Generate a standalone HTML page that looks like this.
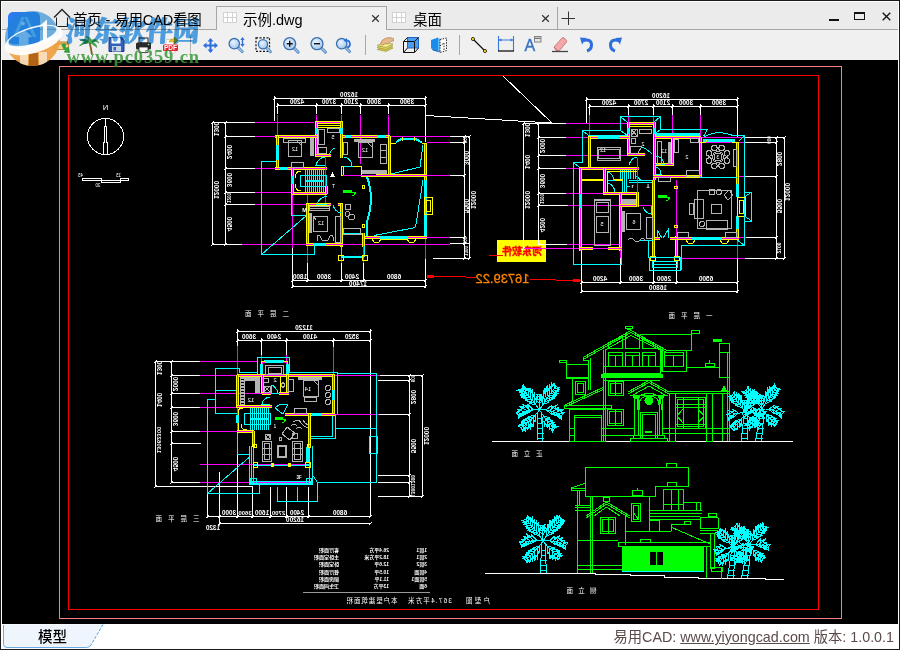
<!DOCTYPE html>
<html lang="zh"><head><meta charset="utf-8"><title>易用CAD看图</title>
<style>
*{box-sizing:border-box;margin:0;padding:0}
html,body{width:900px;height:650px;overflow:hidden;background:#000}
body{position:relative;font-family:"Liberation Sans","Noto Sans CJK SC",sans-serif;color:#000}
#win{position:absolute;left:0;top:0;width:900px;height:650px;border:1px solid #1a1a1a;background:#fff}
#title{position:absolute;left:1px;top:1px;width:896px;height:28px;background:#ebebeb;border-bottom:1px solid #a6a6a6}
#tool{position:absolute;left:1px;top:29px;width:896px;height:30px;background:#f0f0f0}
#cv{position:absolute;left:0;top:0;width:900px;height:650px;pointer-events:none}
#status{position:absolute;left:1px;top:623px;width:896px;height:25px;background:#fff}
.tab{position:absolute;top:5px;height:24px;font-size:14.5px;line-height:22px;white-space:nowrap}
.tab.act{background:#f0f0f0;border:1px solid #a6a6a6;border-bottom:none;height:24px}
.tx{position:absolute;top:0}
.ic{position:absolute}
svg text{font-family:"Liberation Sans","Noto Sans CJK SC",sans-serif}
</style></head>
<body>
<div id="win">
<div id="title">
<svg class="ic" style="left:51px;top:6px" width="18" height="20" viewBox="0 0 18 20"><path d="M1 9.500L9 1.500L17 9.500" stroke="#222" stroke-width="1.400" fill="none"/><path d="M3.500 9.500V18.500H14.500V9.500" stroke="#222" stroke-width="1" fill="none"/></svg>
<div class="tab" style="left:71px;top:7px;letter-spacing:-0.15px">首页 - 易用CAD看图</div>
<div class="tab act" style="left:214px;top:4px;width:171px;height:25px"></div>
<svg class="ic" style="left:221px;top:10px" width="14" height="11" viewBox="0 0 14 11"><rect x="0.5" y="0.5" width="13" height="10" fill="#fff" stroke="#d2d2d2"/><path d="M4.5 0V11M9.5 0V11M0 5.5H14" stroke="#d2d2d2" fill="none"/></svg>
<div class="tab" style="left:241px;top:7px">示例.dwg</div>
<svg class="ic" style="left:369px;top:12px" width="9" height="9" viewBox="0 0 9 9"><path d="M1.2 1.2L7.8 7.8M7.8 1.2L1.2 7.8" stroke="#333" stroke-width="1.25" fill="none"/></svg>
<svg class="ic" style="left:390px;top:10px" width="14" height="11" viewBox="0 0 14 11"><rect x="0.5" y="0.5" width="13" height="10" fill="#fff" stroke="#d2d2d2"/><path d="M4.5 0V11M9.5 0V11M0 5.5H14" stroke="#d2d2d2" fill="none"/></svg>
<div class="tab" style="left:411px;top:7px">桌面</div>
<svg class="ic" style="left:539px;top:12px" width="9" height="9" viewBox="0 0 9 9"><path d="M1.2 1.2L7.8 7.8M7.8 1.2L1.2 7.8" stroke="#333" stroke-width="1.25" fill="none"/></svg>
<div class="ic" style="left:555px;top:5px;width:1px;height:23px;background:#a6a6a6"></div>
<svg class="ic" style="left:559px;top:9px" width="14" height="14" viewBox="0 0 14 14"><path d="M7.500 0.5V14M0.5 7.500H14" stroke="#333" stroke-width="1" fill="none"/></svg>
<div class="ic" style="left:827px;top:17px;width:10px;height:2px;background:#111"></div>
<div class="ic" style="left:852px;top:10px;width:11px;height:8px;border:1px solid #111;border-top-width:2px"></div>
<svg class="ic" style="left:880px;top:10px" width="9" height="9" viewBox="0 0 9 9"><path d="M0.7 0.7L8.3 8.3M8.3 0.7L0.7 8.3" stroke="#111" stroke-width="1.3" fill="none"/></svg>
</div>
<div id="tool"></div>
<div id="status">
<svg class="ic" style="left:0;top:0" width="110" height="25" viewBox="0 0 110 25"><path d="M1 0.5H101L89 21Q87.5 23.5 84.5 23.5H5Q1.5 23.5 1.5 20Z" fill="#eef5fc" stroke="none"/><path d="M89 21Q87.5 23.5 84.5 23.5H5Q1.5 23.5 1.5 20V1" fill="none" stroke="#6aaae0"/><path d="M101 0.5L89 21" fill="none" stroke="#5aa0dc" stroke-dasharray="3 1.5"/><text x="36" y="18" font-size="14.5" fill="#000" font-weight="500">模型</text></svg>
<div class="tx" style="right:4px;top:3px;font-size:14.3px;line-height:20px;color:#5a4a4a;white-space:nowrap">易用CAD: <span style="text-decoration:underline">www.yiyongcad.com</span> 版本: 1.0.0.1</div>
</div>
</div>
<svg id="cv" width="900" height="650" viewBox="0 0 900 650" shape-rendering="crispEdges" fill="none">
<rect x="2" y="60" width="896" height="564" fill="#000" stroke="none"/>
<rect x="59.5" y="66.5" width="782" height="552" stroke="#ff7f7f" fill="none"/>
<rect x="68.5" y="75.5" width="750" height="534" stroke="#ff0000" fill="none"/>
<circle cx="105.5" cy="136.5" r="18" stroke="#ffffff" fill="none"/>
<path stroke="#ffffff" d="M105.5 118L105.5 127"/>
<path stroke="#ffffff" d="M104.5 126L104.5 143"/>
<path stroke="#ffffff" d="M106.5 126L106.5 143"/>
<path stroke="#ffffff" d="M103.5 142L103.5 155"/>
<path stroke="#ffffff" d="M107.5 142L107.5 155"/>
<text transform="translate(105.5 109.5) scale(-1 1)" font-size="7.5" fill="#ffffff" stroke="none" text-anchor="middle">N</text>
<rect x="82.5" y="178.5" width="19" height="2" stroke="#ffffff" fill="none"/>
<rect x="101.5" y="180.5" width="19" height="2" stroke="#ffffff" fill="none"/>
<rect x="120.5" y="178.5" width="8" height="2" stroke="#ffffff" fill="none"/>
<text transform="translate(80.5 176.5) scale(-1 1)" font-size="4.5" fill="#ffffff" stroke="none" text-anchor="middle">45</text>
<text transform="translate(118.5 176.5) scale(-1 1)" font-size="4.5" fill="#ffffff" stroke="none" text-anchor="middle">15</text>
<text transform="translate(98 187) scale(-1 1)" font-size="4.5" fill="#ffffff" stroke="none" text-anchor="middle">30</text>
<path stroke="#ffffff" d="M503 76L552 123"/>
<path stroke="#ffffff" d="M425.5 115.5L552 123"/>
<rect x="497" y="240" width="49" height="21.5" fill="#ffff00" stroke="none"/>
<text transform="translate(522 254.5) scale(-1 1)" font-size="10" fill="#ff0000" text-anchor="middle" font-weight="bold" stroke="#ff0000" stroke-width=".35" font-family="Liberation Serif,Noto Serif CJK SC,serif">河东软件</text>
<path stroke="#ff0000" d="M489 255.5L503 255.5"/>
<text transform="translate(502.5 283) scale(-1 1)" font-size="13.5" fill="#ff8a00" text-anchor="middle" stroke="#ff8000" stroke-width=".3" font-family="Liberation Mono,monospace" textLength="54" lengthAdjust="spacingAndGlyphs">16739.22</text>
<path stroke="#ff0000" d="M427 276.5L455 276.5"/>
<path stroke="#ff0000" d="M455 276.5L476 277.5"/>
<rect x="427" y="275" width="7" height="3" fill="#ff0000" stroke="none"/>
<path stroke="#ff0000" d="M530 279.5L581 280.5"/>
<rect x="573" y="279" width="7" height="3" fill="#ff0000" stroke="none"/>
<path stroke="#ffffff" d="M274 98.5L426 98.5"/>
<path stroke="#ffffff" d="M277 105.5L426 105.5"/>
<path stroke="#ffffff" d="M274.5 96L274.5 121"/>
<path stroke="#ffffff" d="M277.5 103L277.5 114"/>
<path stroke="#ffffff" d="M276 107L279 104"/>
<path stroke="#ffffff" d="M316.5 103L316.5 114"/>
<path stroke="#ffffff" d="M315 107L318 104"/>
<path stroke="#ffffff" d="M341.5 103L341.5 114"/>
<path stroke="#ffffff" d="M340 107L343 104"/>
<path stroke="#ffffff" d="M360.5 103L360.5 114"/>
<path stroke="#ffffff" d="M359 107L362 104"/>
<path stroke="#ffffff" d="M388.5 103L388.5 114"/>
<path stroke="#ffffff" d="M387 107L390 104"/>
<path stroke="#ffffff" d="M425.5 96L425.5 142"/>
<path stroke="#ffffff" d="M273 100L276 97"/>
<path stroke="#ffffff" d="M424 100L427 97"/>
<path stroke="#ffffff" d="M424 107L427 104"/>
<path stroke="#ff00ff" d="M277.5 115L277.5 135"/>
<path stroke="#ff00ff" d="M316.5 115L316.5 121"/>
<path stroke="#ff00ff" d="M341.5 115L341.5 121"/>
<path stroke="#ff00ff" d="M360.5 115L360.5 164"/>
<path stroke="#ff00ff" d="M388.5 115L388.5 136"/>
<text transform="translate(297 103.5) scale(-1 1)" font-size="6.5" fill="#ffffff" stroke="none" text-anchor="middle" font-weight="bold">4200</text>
<text transform="translate(329 103.5) scale(-1 1)" font-size="6.5" fill="#ffffff" stroke="none" text-anchor="middle" font-weight="bold">3700</text>
<text transform="translate(351 103.5) scale(-1 1)" font-size="6.5" fill="#ffffff" stroke="none" text-anchor="middle" font-weight="bold">2100</text>
<text transform="translate(374 103.5) scale(-1 1)" font-size="6.5" fill="#ffffff" stroke="none" text-anchor="middle" font-weight="bold">3000</text>
<text transform="translate(407 103.5) scale(-1 1)" font-size="6.5" fill="#ffffff" stroke="none" text-anchor="middle" font-weight="bold">3900</text>
<text transform="translate(349 96.5) scale(-1 1)" font-size="6.5" fill="#ffffff" stroke="none" text-anchor="middle" font-weight="bold">16200</text>
<path stroke="#ffffff" d="M212.5 122L212.5 245"/>
<path stroke="#ffffff" d="M225.5 122L225.5 245"/>
<path stroke="#ffffff" d="M224 124L227 121"/>
<path stroke="#ffffff" d="M224 138L227 135"/>
<path stroke="#ffffff" d="M224 170L227 167"/>
<path stroke="#ffffff" d="M224 194L227 191"/>
<path stroke="#ffffff" d="M224 206L227 203"/>
<path stroke="#ffffff" d="M224 246L227 243"/>
<path stroke="#ffffff" d="M211 124L214 121"/>
<path stroke="#ffffff" d="M211 246L214 243"/>
<path stroke="#ffffff" d="M212 122.5L255 122.5"/>
<path stroke="#ff00ff" d="M255 122.5L314 122.5"/>
<path stroke="#ffffff" d="M225 136.5L255 136.5"/>
<path stroke="#ff00ff" d="M255 136.5L275 136.5"/>
<path stroke="#ffffff" d="M225 168.5L255 168.5"/>
<path stroke="#ff00ff" d="M255 168.5L275 168.5"/>
<path stroke="#ffffff" d="M225 192.5L255 192.5"/>
<path stroke="#ff00ff" d="M255 192.5L292 192.5"/>
<path stroke="#ffffff" d="M225 204.5L255 204.5"/>
<path stroke="#ff00ff" d="M255 204.5L307 204.5"/>
<path stroke="#ffffff" d="M212 244.5L242 244.5"/>
<path stroke="#ff00ff" d="M242 244.5L450 244.5"/>
<text transform="translate(214 129) rotate(90) scale(-1 1)" font-size="6.5" fill="#ffffff" stroke="none" text-anchor="middle" font-weight="bold">1300</text>
<text transform="translate(227 152) rotate(90) scale(-1 1)" font-size="6.5" fill="#ffffff" stroke="none" text-anchor="middle" font-weight="bold">2400</text>
<text transform="translate(227 180) rotate(90) scale(-1 1)" font-size="6.5" fill="#ffffff" stroke="none" text-anchor="middle" font-weight="bold">3600</text>
<text transform="translate(227 224) rotate(90) scale(-1 1)" font-size="6.5" fill="#ffffff" stroke="none" text-anchor="middle" font-weight="bold">4500</text>
<text transform="translate(214 190) rotate(90) scale(-1 1)" font-size="6.5" fill="#ffffff" stroke="none" text-anchor="middle" font-weight="bold">12000</text>
<text transform="translate(227 198) rotate(90) scale(-1 1)" font-size="4.5" fill="#ffffff" stroke="none" text-anchor="middle" font-weight="bold">1200</text>
<path stroke="#ffffff" d="M464.5 136L464.5 259"/>
<path stroke="#ffffff" d="M469.5 136L469.5 259"/>
<path stroke="#ffffff" d="M463 138L466 135"/>
<path stroke="#ffffff" d="M463 144L466 141"/>
<path stroke="#ffffff" d="M463 177L466 174"/>
<path stroke="#ffffff" d="M463 239L466 236"/>
<path stroke="#ffffff" d="M463 245L466 242"/>
<path stroke="#ffffff" d="M463 260L466 257"/>
<path stroke="#ffffff" d="M468 138L471 135"/>
<path stroke="#ffffff" d="M468 260L471 257"/>
<path stroke="#ff00ff" d="M389 136.5L450 136.5"/>
<path stroke="#ffffff" d="M450 136.5L470 136.5"/>
<path stroke="#ff00ff" d="M427 142.5L450 142.5"/>
<path stroke="#ffffff" d="M450 142.5L465 142.5"/>
<path stroke="#ff00ff" d="M427 175.5L450 175.5"/>
<path stroke="#ffffff" d="M450 175.5L465 175.5"/>
<path stroke="#ff00ff" d="M427 237.5L450 237.5"/>
<path stroke="#ffffff" d="M450 237.5L465 237.5"/>
<path stroke="#ffffff" d="M450 243.5L470 243.5"/>
<path stroke="#ffffff" d="M433 258.5L470 258.5"/>
<text transform="translate(463 139.5) rotate(90) scale(-1 1)" font-size="4.5" fill="#ffffff" stroke="none" text-anchor="middle" font-weight="bold">600</text>
<text transform="translate(464 158) rotate(90) scale(-1 1)" font-size="6.5" fill="#ffffff" stroke="none" text-anchor="middle" font-weight="bold">3000</text>
<text transform="translate(464 206) rotate(90) scale(-1 1)" font-size="6.5" fill="#ffffff" stroke="none" text-anchor="middle" font-weight="bold">5500</text>
<text transform="translate(471 200) rotate(90) scale(-1 1)" font-size="6.5" fill="#ffffff" stroke="none" text-anchor="middle" font-weight="bold">12000</text>
<text transform="translate(463 240.5) rotate(90) scale(-1 1)" font-size="4.5" fill="#ffffff" stroke="none" text-anchor="middle" font-weight="bold">600</text>
<text transform="translate(464 251) rotate(90) scale(-1 1)" font-size="4.5" fill="#ffffff" stroke="none" text-anchor="middle" font-weight="bold">1300</text>
<path stroke="#ffffff" d="M292 280.5L426 280.5"/>
<path stroke="#ffffff" d="M292 286.5L426 286.5"/>
<path stroke="#ffffff" d="M291 282L294 279"/>
<path stroke="#ffffff" d="M306 282L309 279"/>
<path stroke="#ffffff" d="M340 282L343 279"/>
<path stroke="#ffffff" d="M362 282L365 279"/>
<path stroke="#ffffff" d="M424 282L427 279"/>
<path stroke="#ffffff" d="M291 288L294 285"/>
<path stroke="#ffffff" d="M424 288L427 285"/>
<path stroke="#ff00ff" d="M292.5 194L292.5 248"/>
<path stroke="#ffffff" d="M292.5 248L292.5 288"/>
<path stroke="#ff00ff" d="M307.5 194L307.5 263"/>
<path stroke="#ffffff" d="M307.5 263L307.5 282"/>
<path stroke="#ff00ff" d="M341.5 246L341.5 263"/>
<path stroke="#ffffff" d="M341.5 263L341.5 282"/>
<path stroke="#ff00ff" d="M363.5 246L363.5 263"/>
<path stroke="#ffffff" d="M363.5 263L363.5 282"/>
<path stroke="#ff00ff" d="M425.5 237L425.5 259"/>
<path stroke="#ffffff" d="M425.5 259L425.5 288"/>
<text transform="translate(300 279) scale(-1 1)" font-size="6.5" fill="#ffffff" stroke="none" text-anchor="middle" font-weight="bold">1800</text>
<text transform="translate(324 279) scale(-1 1)" font-size="6.5" fill="#ffffff" stroke="none" text-anchor="middle" font-weight="bold">3600</text>
<text transform="translate(352 279) scale(-1 1)" font-size="6.5" fill="#ffffff" stroke="none" text-anchor="middle" font-weight="bold">2400</text>
<text transform="translate(394 279) scale(-1 1)" font-size="6.5" fill="#ffffff" stroke="none" text-anchor="middle" font-weight="bold">6800</text>
<text transform="translate(358 285.5) scale(-1 1)" font-size="6.5" fill="#ffffff" stroke="none" text-anchor="middle" font-weight="bold">17400</text>
<path stroke="#00ffff" d="M261.5 161L261.5 255"/>
<path stroke="#00ffff" d="M261 161.5L276 161.5"/>
<path stroke="#00ffff" d="M261 254.5L315 254.5"/>
<path stroke="#00ffff" d="M314.5 245L314.5 255"/>
<path stroke="#00ffff" d="M261.5 254.5L306.5 215.5"/>
<path stroke="#00ffff" d="M291.5 194L291.5 216"/>
<path stroke="#00ffff" d="M291 215.5L307 215.5"/>
<rect x="315" y="121" width="28" height="3" fill="#ffff00" stroke="none"/>
<rect x="315" y="122" width="28" height="1" fill="#ff00ff" stroke="none"/>
<path stroke="#ffff00" d="M318 125.5L340 125.5"/>
<path stroke="#ffff00" d="M318 127.5L340 127.5"/>
<rect x="315" y="122" width="3" height="35" fill="#ffff00" stroke="none"/>
<rect x="316" y="122" width="1" height="35" fill="#ff00ff" stroke="none"/>
<rect x="340" y="122" width="3" height="36" fill="#ffff00" stroke="none"/>
<rect x="341" y="122" width="1" height="36" fill="#ff00ff" stroke="none"/>
<rect x="315" y="128" width="3" height="6" fill="#00ffff" stroke="none"/>
<rect x="340" y="128" width="3" height="6" fill="#00ffff" stroke="none"/>
<rect x="316" y="154" width="15" height="3" fill="#ffff00" stroke="none"/>
<rect x="316" y="155" width="15" height="1" fill="#ff00ff" stroke="none"/>
<rect x="275" y="135" width="42" height="3" fill="#ffff00" stroke="none"/>
<rect x="275" y="136" width="42" height="1" fill="#ff00ff" stroke="none"/>
<rect x="276" y="136" width="3" height="34" fill="#ffff00" stroke="none"/>
<rect x="277" y="136" width="1" height="34" fill="#ff00ff" stroke="none"/>
<rect x="276" y="145" width="3" height="15" fill="#00ffff" stroke="none"/>
<rect x="275" y="167" width="52" height="3" fill="#ffff00" stroke="none"/>
<rect x="275" y="168" width="52" height="1" fill="#ff00ff" stroke="none"/>
<rect x="280" y="167" width="8" height="3" fill="#00ffff" stroke="none"/>
<rect x="343" y="135" width="47" height="3" fill="#ffff00" stroke="none"/>
<rect x="343" y="136" width="47" height="1" fill="#ff00ff" stroke="none"/>
<rect x="345" y="135" width="6" height="3" fill="#00ffff" stroke="none"/>
<rect x="377" y="135" width="9" height="3" fill="#00ffff" stroke="none"/>
<rect x="388" y="136" width="3" height="41" fill="#ffff00" stroke="none"/>
<rect x="389" y="136" width="1" height="41" fill="#ff00ff" stroke="none"/>
<rect x="341.5" y="166.5" width="20" height="9" stroke="#ffff00" fill="none"/>
<path stroke="#ff00ff" d="M343 175.5L389 175.5"/>
<path stroke="#ffff00" d="M361 176.5L389 176.5"/>
<path stroke="#ffff00" d="M343.5 167L343.5 175"/>
<rect x="376" y="174" width="14" height="3" fill="#ffff00" stroke="none"/>
<rect x="376" y="175" width="14" height="1" fill="#ff00ff" stroke="none"/>
<rect x="424" y="143" width="3" height="96" fill="#ffff00" stroke="none"/>
<rect x="425" y="143" width="1" height="96" fill="#ff00ff" stroke="none"/>
<path stroke="#ffff00" fill="none" d="M390 143H396L397 141.5M421 141.5L422 143H427"/>
<path stroke="#00ffff" fill="none" stroke-width="2" d="M396 142L402 138.5H415L421 142"/>
<path stroke="#ffff00" d="M402.5 137L402.5 141"/>
<path stroke="#ffff00" d="M414.5 137L414.5 141"/>
<rect x="389" y="174" width="38" height="3" fill="#ffff00" stroke="none"/>
<rect x="389" y="175" width="38" height="1" fill="#ff00ff" stroke="none"/>
<path stroke="#00ffff" d="M423 180L415.5 227.5"/>
<path stroke="#00ffff" d="M415.5 227.5L374 235.5"/>
<path stroke="#00ffff" d="M391 174L420 167"/>
<path stroke="#00ffff" d="M420 167L423 145"/>
<rect x="424" y="180" width="3" height="56" fill="#00ffff" stroke="none"/>
<rect x="424.5" y="197.5" width="8" height="17" stroke="#ffff00" fill="none"/>
<rect x="426.5" y="200.5" width="4" height="11" stroke="#ffff00" fill="none"/>
<path stroke="#ff00ff" d="M325.5 158L325.5 206"/>
<rect x="292" y="192" width="35" height="3" fill="#ffff00" stroke="none"/>
<rect x="292" y="193" width="35" height="1" fill="#ff00ff" stroke="none"/>
<rect x="291" y="168" width="3" height="26" fill="#ffff00" stroke="none"/>
<rect x="292" y="168" width="1" height="26" fill="#ff00ff" stroke="none"/>
<rect x="291" y="176" width="3" height="8" fill="#00ffff" stroke="none"/>
<path stroke="#ffff00" fill="none" d="M295 178Q295 171 301 171M295 184Q295 191 301 191"/>
<path stroke="#00ffff" d="M305.5 170L305.5 192"/>
<path stroke="#00ffff" d="M307.5 170L307.5 192"/>
<path stroke="#00ffff" d="M309.5 170L309.5 192"/>
<path stroke="#00ffff" d="M311.5 170L311.5 192"/>
<path stroke="#00ffff" d="M313.5 170L313.5 192"/>
<path stroke="#00ffff" d="M315.5 170L315.5 192"/>
<path stroke="#00ffff" d="M317.5 170L317.5 192"/>
<path stroke="#00ffff" d="M319.5 170L319.5 192"/>
<path stroke="#00ffff" d="M321.5 170L321.5 192"/>
<path stroke="#00ffff" d="M323.5 170L323.5 192"/>
<rect x="300.5" y="175.5" width="26" height="11" stroke="#00ffff" fill="none"/>
<rect x="305" y="180" width="19" height="2" fill="#00ffff" stroke="none"/>
<rect x="325" y="186" width="3" height="8" fill="#ffff00" stroke="none"/>
<rect x="326" y="186" width="1" height="8" fill="#ff00ff" stroke="none"/>
<rect x="306" y="203" width="25" height="3" fill="#ffff00" stroke="none"/>
<rect x="306" y="204" width="25" height="1" fill="#ff00ff" stroke="none"/>
<rect x="338" y="203" width="5" height="3" fill="#ffff00" stroke="none"/>
<rect x="338" y="204" width="5" height="1" fill="#ff00ff" stroke="none"/>
<rect x="306" y="204" width="3" height="42" fill="#ffff00" stroke="none"/>
<rect x="307" y="204" width="1" height="42" fill="#ff00ff" stroke="none"/>
<rect x="340" y="204" width="3" height="43" fill="#ffff00" stroke="none"/>
<rect x="341" y="204" width="1" height="43" fill="#ff00ff" stroke="none"/>
<rect x="306" y="243" width="7" height="3" fill="#ffff00" stroke="none"/>
<rect x="306" y="244" width="7" height="1" fill="#ff00ff" stroke="none"/>
<rect x="313" y="243" width="13" height="3" fill="#00ffff" stroke="none"/>
<rect x="326" y="243" width="17" height="3" fill="#ffff00" stroke="none"/>
<rect x="326" y="244" width="17" height="1" fill="#ff00ff" stroke="none"/>
<path stroke="#00ffff" fill="none" stroke-width="2" d="M367 177Q369 182 370 188Q372 200 369.5 212Q368 218 367 222V238"/>
<path stroke="#00ffff" stroke-width="2" d="M343 234L362 234"/>
<rect x="365" y="236" width="15" height="3" fill="#ffff00" stroke="none"/>
<rect x="365" y="237" width="15" height="1" fill="#ff00ff" stroke="none"/>
<rect x="380" y="236" width="28" height="3" fill="#00ffff" stroke="none"/>
<rect x="408" y="236" width="19" height="3" fill="#ffff00" stroke="none"/>
<rect x="408" y="237" width="19" height="1" fill="#ff00ff" stroke="none"/>
<path stroke="#ffff00" d="M380 239.5L408 239.5"/>
<path stroke="#ffff00" fill="none" d="M372 239L374 242H379L381 239M407 239L409 242H414L416 239"/>
<rect x="362.5" y="185.5" width="2" height="3" stroke="#ffff00" fill="none"/>
<rect x="362.5" y="224.5" width="2" height="3" stroke="#ffff00" fill="none"/>
<rect x="362" y="233" width="3" height="14" fill="#ffff00" stroke="none"/>
<rect x="363" y="233" width="1" height="14" fill="#ff00ff" stroke="none"/>
<path stroke="#00ffff" stroke-width="2" d="M341 257L364 257"/>
<path stroke="#00ffff" d="M364.5 246L364.5 257"/>
<path stroke="#00ffff" d="M341.5 246L341.5 257"/>
<rect x="338.5" y="255.5" width="5" height="5" stroke="#ffff00" fill="none"/>
<rect x="362.5" y="255.5" width="5" height="5" stroke="#ffff00" fill="none"/>
<path stroke="#00ffff" fill="none" d="M325 157Q318 158 316 165H325"/>
<path stroke="#00ffff" fill="none" d="M335 148Q330 150 329 156"/>
<path stroke="#00ffff" fill="none" d="M344 157Q351 158 352 166H344"/>
<path stroke="#00ffff" fill="none" d="M327 196Q319 198 317 204H327"/>
<path stroke="#00ffff" fill="none" d="M333 205Q335 212 341 213"/>
<rect x="288.5" y="140.5" width="13" height="16" stroke="#b4b4b4" fill="none"/>
<rect x="283.5" y="138.5" width="22" height="4" stroke="#b4b4b4" fill="none"/>
<path stroke="#b4b4b4" d="M296 140L301 145"/>
<rect x="309.5" y="138" width="4.5" height="18" fill="#b4b4b4" stroke="none"/>
<rect x="291.5" y="162.5" width="12" height="5" stroke="#b4b4b4" fill="none"/>
<rect x="318.5" y="129.5" width="6" height="15" stroke="#b4b4b4" fill="none"/>
<rect x="318.5" y="147.5" width="8" height="6" stroke="#b4b4b4" fill="none"/>
<rect x="327.5" y="128.5" width="12" height="4" stroke="#b4b4b4" fill="none"/>
<rect x="358.5" y="142.5" width="14" height="15" stroke="#b4b4b4" fill="none"/>
<rect x="354" y="139" width="21" height="3" fill="#b4b4b4" stroke="none"/>
<rect x="343.5" y="142.5" width="4" height="12" stroke="#b4b4b4" fill="none"/>
<path stroke="#b4b4b4" d="M367 142L372 147"/>
<rect x="380.5" y="144.5" width="6" height="19" stroke="#b4b4b4" fill="none"/>
<path stroke="#b4b4b4" d="M380 150.5L386 150.5"/>
<path stroke="#b4b4b4" d="M380 157.5L386 157.5"/>
<rect x="362" y="170" width="25" height="4" fill="#b4b4b4" stroke="none"/>
<rect x="309.5" y="206.5" width="20" height="4" stroke="#b4b4b4" fill="none"/>
<path stroke="#b4b4b4" d="M309 208.5L329 208.5"/>
<rect x="313.5" y="216.5" width="14" height="15" stroke="#b4b4b4" fill="none"/>
<rect x="309" y="213" width="3" height="20" fill="#b4b4b4" stroke="none"/>
<rect x="335.5" y="216.5" width="5" height="26" stroke="#b4b4b4" fill="none"/>
<path stroke="#b4b4b4" d="M313 216L316 220"/>
<path stroke="#b4b4b4" fill="none" d="M317 241V237Q317 235 320 236L322 240Q325 242 328 240L330 236Q333 235 333 237V241"/>
<rect x="345.5" y="204.5" width="5" height="5" stroke="#b4b4b4" fill="none"/>
<circle cx="347.5" cy="214" r="2.5" stroke="#b4b4b4" fill="none"/>
<circle cx="351.5" cy="217" r="3" stroke="#b4b4b4" fill="none"/>
<rect x="343.5" y="228.5" width="17" height="6" stroke="#b4b4b4" fill="none"/>
<text transform="translate(295 151) scale(-1 1)" font-size="5.5" fill="#ffffff" stroke="none" text-anchor="middle">12</text>
<text transform="translate(365 152) scale(-1 1)" font-size="5.5" fill="#ffffff" stroke="none" text-anchor="middle">12</text>
<text transform="translate(321 225) scale(-1 1)" font-size="5.5" fill="#ffffff" stroke="none" text-anchor="middle">12</text>
<text transform="translate(333 139) scale(-1 1)" font-size="5.5" fill="#ffffff" stroke="none" text-anchor="middle">5</text>
<path stroke="#ffffff" fill="#ffffff" d="M331 176L334 176L332.5 173Z"/>
<text transform="translate(333.5 188)" font-size="5" fill="#ffffff" stroke="none" text-anchor="middle">T</text>
<text transform="translate(304.5 212)" font-size="5.5" fill="#ffffff" stroke="none" text-anchor="middle" font-weight="bold">M</text>
<rect x="343" y="190" width="9" height="3" fill="#00ff00" stroke="none"/>
<path stroke="#00ff00" fill="none" d="M352 192H356L354 195H352"/>
<path stroke="#ffffff" d="M586 99.5L738 99.5"/>
<path stroke="#ffffff" d="M589 106.5L738 106.5"/>
<path stroke="#ffffff" d="M586.5 97L586.5 123"/>
<path stroke="#ffffff" d="M589.5 104L589.5 115"/>
<path stroke="#ffffff" d="M588 108L591 105"/>
<path stroke="#ffffff" d="M628.5 104L628.5 115"/>
<path stroke="#ffffff" d="M627 108L630 105"/>
<path stroke="#ffffff" d="M653.5 104L653.5 115"/>
<path stroke="#ffffff" d="M652 108L655 105"/>
<path stroke="#ffffff" d="M672.5 104L672.5 115"/>
<path stroke="#ffffff" d="M671 108L674 105"/>
<path stroke="#ffffff" d="M700.5 104L700.5 115"/>
<path stroke="#ffffff" d="M699 108L702 105"/>
<path stroke="#ffffff" d="M737.5 97L737.5 137"/>
<path stroke="#ffffff" d="M585 101L588 98"/>
<path stroke="#ffffff" d="M736 101L739 98"/>
<path stroke="#ffffff" d="M736 108L739 105"/>
<path stroke="#ff00ff" d="M589.5 115L589.5 137"/>
<path stroke="#ff00ff" d="M628.5 115L628.5 122"/>
<path stroke="#ff00ff" d="M653.5 115L653.5 122"/>
<path stroke="#ff00ff" d="M672.5 115L672.5 137"/>
<path stroke="#ff00ff" d="M700.5 115L700.5 137"/>
<text transform="translate(609 104.5) scale(-1 1)" font-size="6.5" fill="#ffffff" stroke="none" text-anchor="middle" font-weight="bold">4200</text>
<text transform="translate(641 104.5) scale(-1 1)" font-size="6.5" fill="#ffffff" stroke="none" text-anchor="middle" font-weight="bold">2700</text>
<text transform="translate(663 104.5) scale(-1 1)" font-size="6.5" fill="#ffffff" stroke="none" text-anchor="middle" font-weight="bold">2100</text>
<text transform="translate(686 104.5) scale(-1 1)" font-size="6.5" fill="#ffffff" stroke="none" text-anchor="middle" font-weight="bold">3000</text>
<text transform="translate(719 104.5) scale(-1 1)" font-size="6.5" fill="#ffffff" stroke="none" text-anchor="middle" font-weight="bold">3900</text>
<text transform="translate(661 97.5) scale(-1 1)" font-size="6.5" fill="#ffffff" stroke="none" text-anchor="middle" font-weight="bold">16200</text>
<path stroke="#ffffff" d="M523.5 123L523.5 249"/>
<path stroke="#ffffff" d="M538.5 123L538.5 245"/>
<path stroke="#ffffff" d="M537 125L540 122"/>
<path stroke="#ffffff" d="M537 139L540 136"/>
<path stroke="#ffffff" d="M537 157L540 154"/>
<path stroke="#ffffff" d="M537 170L540 167"/>
<path stroke="#ffffff" d="M537 195L540 192"/>
<path stroke="#ffffff" d="M537 207L540 204"/>
<path stroke="#ffffff" d="M537 246L540 243"/>
<path stroke="#ffffff" d="M522 125L525 122"/>
<path stroke="#ffffff" d="M522 250L525 247"/>
<path stroke="#ffffff" d="M523 123.5L566 123.5"/>
<path stroke="#ff00ff" d="M566 123.5L627 123.5"/>
<path stroke="#ffffff" d="M538 137.5L566 137.5"/>
<path stroke="#ff00ff" d="M566 137.5L589 137.5"/>
<path stroke="#ffffff" d="M538 155.5L566 155.5"/>
<path stroke="#ff00ff" d="M566 155.5L640 155.5"/>
<path stroke="#ffffff" d="M538 168.5L566 168.5"/>
<path stroke="#ff00ff" d="M566 168.5L580 168.5"/>
<path stroke="#ffffff" d="M538 193.5L566 193.5"/>
<path stroke="#ff00ff" d="M566 193.5L604 193.5"/>
<path stroke="#ffffff" d="M538 205.5L568 205.5"/>
<path stroke="#ff00ff" d="M568 205.5L655 205.5"/>
<path stroke="#ffffff" d="M538 244.5L567 244.5"/>
<path stroke="#ff00ff" d="M567 244.5L620 244.5"/>
<path stroke="#ff00ff" d="M524 248.5L620 248.5"/>
<text transform="translate(525 130) rotate(90) scale(-1 1)" font-size="6.5" fill="#ffffff" stroke="none" text-anchor="middle" font-weight="bold">1300</text>
<text transform="translate(540 146) rotate(90) scale(-1 1)" font-size="6.5" fill="#ffffff" stroke="none" text-anchor="middle" font-weight="bold">2000</text>
<text transform="translate(525 162) rotate(90) scale(-1 1)" font-size="6.5" fill="#ffffff" stroke="none" text-anchor="middle" font-weight="bold">1400</text>
<text transform="translate(540 181) rotate(90) scale(-1 1)" font-size="6.5" fill="#ffffff" stroke="none" text-anchor="middle" font-weight="bold">3600</text>
<text transform="translate(525 200) rotate(90) scale(-1 1)" font-size="6.5" fill="#ffffff" stroke="none" text-anchor="middle" font-weight="bold">12000</text>
<text transform="translate(540 199) rotate(90) scale(-1 1)" font-size="4.5" fill="#ffffff" stroke="none" text-anchor="middle" font-weight="bold">1200</text>
<text transform="translate(540 225) rotate(90) scale(-1 1)" font-size="6.5" fill="#ffffff" stroke="none" text-anchor="middle" font-weight="bold">4200</text>
<path stroke="#ffffff" d="M776.5 137L776.5 259"/>
<path stroke="#ffffff" d="M784.5 137L784.5 259"/>
<path stroke="#ffffff" d="M775 139L778 136"/>
<path stroke="#ffffff" d="M775 144L778 141"/>
<path stroke="#ffffff" d="M775 178L778 175"/>
<path stroke="#ffffff" d="M775 239L778 236"/>
<path stroke="#ffffff" d="M775 260L778 257"/>
<path stroke="#ffffff" d="M783 139L786 136"/>
<path stroke="#ffffff" d="M783 260L786 257"/>
<path stroke="#ff00ff" d="M700 137.5L745 137.5"/>
<path stroke="#ffffff" d="M745 137.5L785 137.5"/>
<path stroke="#ff00ff" d="M700 142.5L745 142.5"/>
<path stroke="#ffffff" d="M745 142.5L777 142.5"/>
<path stroke="#ff00ff" d="M738 176.5L745 176.5"/>
<path stroke="#ffffff" d="M745 176.5L777 176.5"/>
<path stroke="#ff00ff" d="M738 237.5L746 237.5"/>
<path stroke="#ffffff" d="M746 237.5L777 237.5"/>
<path stroke="#ff00ff" d="M681 258.5L745 258.5"/>
<path stroke="#ffffff" d="M745 258.5L785 258.5"/>
<text transform="translate(767 140) rotate(90) scale(-1 1)" font-size="4.5" fill="#ffffff" stroke="none" text-anchor="middle" font-weight="bold">600</text>
<text transform="translate(777 159) rotate(90) scale(-1 1)" font-size="6.5" fill="#ffffff" stroke="none" text-anchor="middle" font-weight="bold">2800</text>
<text transform="translate(777 206) rotate(90) scale(-1 1)" font-size="6.5" fill="#ffffff" stroke="none" text-anchor="middle" font-weight="bold">5500</text>
<text transform="translate(785 192) rotate(90) scale(-1 1)" font-size="6.5" fill="#ffffff" stroke="none" text-anchor="middle" font-weight="bold">12000</text>
<text transform="translate(777 248) rotate(90) scale(-1 1)" font-size="5" fill="#ffffff" stroke="none" text-anchor="middle" font-weight="bold">2100</text>
<path stroke="#ffffff" d="M581 282.5L738 282.5"/>
<path stroke="#ffffff" d="M581 291.5L738 291.5"/>
<path stroke="#ffffff" d="M580 284L583 281"/>
<path stroke="#ffffff" d="M619 284L622 281"/>
<path stroke="#ffffff" d="M652 284L655 281"/>
<path stroke="#ffffff" d="M675 284L678 281"/>
<path stroke="#ffffff" d="M736 284L739 281"/>
<path stroke="#ffffff" d="M580 293L583 290"/>
<path stroke="#ffffff" d="M736 293L739 290"/>
<path stroke="#ffffff" d="M581.5 250L581.5 293"/>
<path stroke="#ff00ff" d="M620.5 250L620.5 258"/>
<path stroke="#ffffff" d="M620.5 258L620.5 284"/>
<path stroke="#ffffff" d="M653.5 262L653.5 284"/>
<path stroke="#ffffff" d="M676.5 262L676.5 284"/>
<path stroke="#ff00ff" d="M737.5 238L737.5 258"/>
<path stroke="#ffffff" d="M737.5 258L737.5 293"/>
<text transform="translate(600 281) scale(-1 1)" font-size="6.5" fill="#ffffff" stroke="none" text-anchor="middle" font-weight="bold">4200</text>
<text transform="translate(636 281) scale(-1 1)" font-size="6.5" fill="#ffffff" stroke="none" text-anchor="middle" font-weight="bold">3600</text>
<text transform="translate(664 281) scale(-1 1)" font-size="6.5" fill="#ffffff" stroke="none" text-anchor="middle" font-weight="bold">2600</text>
<text transform="translate(706 281) scale(-1 1)" font-size="6.5" fill="#ffffff" stroke="none" text-anchor="middle" font-weight="bold">6500</text>
<text transform="translate(658 290) scale(-1 1)" font-size="6.5" fill="#ffffff" stroke="none" text-anchor="middle" font-weight="bold">16800</text>
<text transform="translate(690.5 318) scale(-1 1)" font-size="6.5" fill="#ffffff" stroke="none" text-anchor="middle" textLength="44">一 层 平 面</text>
<path stroke="#00ffff" fill="none" d="M573.5 250L573.5 162.5L582.5 162.5L582.5 130.5L620.5 130.5L620.5 116.5L660.5 116.5L660.5 129.5L707.5 129.5"/>
<path stroke="#00ffff" fill="none" d="M579.5 168L579.5 167.5L588.5 167.5L588.5 135.5L627.5 135.5L627.5 122.5L653.5 122.5L653.5 134.5L700 134.5"/>
<path stroke="#00ffff" d="M620.5 116.5L627.5 122.5"/>
<path stroke="#00ffff" d="M660.5 116.5L653.5 122.5"/>
<path stroke="#00ffff" d="M582.5 130.5L588.5 135.5"/>
<path stroke="#00ffff" d="M573.5 162.5L579.5 167.5"/>
<path stroke="#00ffff" d="M620.5 130.5L627.5 135.5"/>
<path stroke="#00ffff" d="M660.5 129.5L653.5 134.5"/>
<path stroke="#00ffff" fill="none" d="M704 137Q712 132.5 720 132.5Q727 133 733 135.5H744.5V245.5H681.5V270"/>
<path stroke="#00ffff" d="M707.5 129.5L703.5 136.5"/>
<path stroke="#00ffff" d="M744.5 135.5L739 141"/>
<path stroke="#00ffff" fill="none" d="M573.5 250L573.5 264.5L621.5 264.5L621.5 250"/>
<rect x="627" y="122" width="28" height="3" fill="#ffff00" stroke="none"/>
<rect x="627" y="123" width="28" height="1" fill="#ff00ff" stroke="none"/>
<path stroke="#ffff00" d="M630 126.5L652 126.5"/>
<rect x="627" y="122" width="3" height="34" fill="#ffff00" stroke="none"/>
<rect x="628" y="122" width="1" height="34" fill="#ff00ff" stroke="none"/>
<rect x="653" y="122" width="3" height="58" fill="#ffff00" stroke="none"/>
<rect x="654" y="122" width="1" height="58" fill="#ff00ff" stroke="none"/>
<rect x="627" y="128" width="3" height="6" fill="#00ffff" stroke="none"/>
<rect x="653" y="128" width="3" height="6" fill="#00ffff" stroke="none"/>
<rect x="628" y="153" width="17" height="3" fill="#ffff00" stroke="none"/>
<rect x="628" y="154" width="17" height="1" fill="#ff00ff" stroke="none"/>
<rect x="588" y="136" width="10" height="3" fill="#ffff00" stroke="none"/>
<rect x="588" y="137" width="10" height="1" fill="#ff00ff" stroke="none"/>
<rect x="598" y="136" width="21" height="3" fill="#00ffff" stroke="none"/>
<rect x="619" y="136" width="10" height="3" fill="#ffff00" stroke="none"/>
<rect x="619" y="137" width="10" height="1" fill="#ff00ff" stroke="none"/>
<rect x="656" y="133" width="44" height="3" fill="#00ffff" stroke="none"/>
<rect x="588" y="137" width="3" height="33" fill="#ffff00" stroke="none"/>
<rect x="589" y="137" width="1" height="33" fill="#ff00ff" stroke="none"/>
<rect x="579" y="167" width="60" height="3" fill="#ffff00" stroke="none"/>
<rect x="579" y="168" width="60" height="1" fill="#ff00ff" stroke="none"/>
<rect x="579" y="168" width="3" height="83" fill="#ffff00" stroke="none"/>
<rect x="580" y="168" width="1" height="83" fill="#ff00ff" stroke="none"/>
<rect x="579" y="194" width="3" height="14" fill="#00ffff" stroke="none"/>
<path stroke="#ffff00" stroke-width="2" d="M582 180L604 180"/>
<rect x="603" y="168" width="3" height="27" fill="#ffff00" stroke="none"/>
<rect x="604" y="168" width="1" height="27" fill="#ff00ff" stroke="none"/>
<rect x="604" y="192" width="35" height="3" fill="#ffff00" stroke="none"/>
<rect x="604" y="193" width="35" height="1" fill="#ff00ff" stroke="none"/>
<rect x="619" y="193" width="3" height="58" fill="#ffff00" stroke="none"/>
<rect x="620" y="193" width="1" height="58" fill="#ff00ff" stroke="none"/>
<rect x="580" y="247" width="13" height="3" fill="#ffff00" stroke="none"/>
<rect x="580" y="248" width="13" height="1" fill="#ff00ff" stroke="none"/>
<rect x="608" y="247" width="14" height="3" fill="#ffff00" stroke="none"/>
<rect x="608" y="248" width="14" height="1" fill="#ff00ff" stroke="none"/>
<rect x="620" y="204" width="18" height="3" fill="#ffff00" stroke="none"/>
<rect x="620" y="205" width="18" height="1" fill="#ff00ff" stroke="none"/>
<rect x="636" y="192" width="3" height="15" fill="#ffff00" stroke="none"/>
<rect x="637" y="192" width="1" height="15" fill="#ff00ff" stroke="none"/>
<rect x="655" y="136" width="46" height="3" fill="#ffff00" stroke="none"/>
<rect x="655" y="137" width="46" height="1" fill="#ff00ff" stroke="none"/>
<rect x="699" y="137" width="3" height="41" fill="#ffff00" stroke="none"/>
<rect x="700" y="137" width="1" height="41" fill="#ff00ff" stroke="none"/>
<rect x="671" y="138" width="3" height="28" fill="#ffff00" stroke="none"/>
<rect x="672" y="138" width="1" height="28" fill="#ff00ff" stroke="none"/>
<rect x="655" y="163" width="18" height="3" fill="#ffff00" stroke="none"/>
<rect x="655" y="164" width="18" height="1" fill="#ff00ff" stroke="none"/>
<rect x="653" y="175" width="48" height="3" fill="#ffff00" stroke="none"/>
<rect x="653" y="176" width="48" height="1" fill="#ff00ff" stroke="none"/>
<rect x="736" y="142" width="3" height="55" fill="#ffff00" stroke="none"/>
<rect x="737" y="142" width="1" height="55" fill="#ff00ff" stroke="none"/>
<rect x="736" y="216" width="3" height="23" fill="#ffff00" stroke="none"/>
<rect x="737" y="216" width="1" height="23" fill="#ff00ff" stroke="none"/>
<rect x="736" y="184" width="3" height="13" fill="#00ffff" stroke="none"/>
<rect x="736" y="216" width="3" height="13" fill="#00ffff" stroke="none"/>
<rect x="703" y="139" width="32" height="3" fill="#00ffff" stroke="none"/>
<path stroke="#ffff00" fill="none" d="M700 142H706L707 140M731 140L732 142H739"/>
<path stroke="#00ffff" d="M700 177.5L737 177.5"/>
<rect x="676" y="237" width="16" height="3" fill="#ffff00" stroke="none"/>
<rect x="676" y="238" width="16" height="1" fill="#ff00ff" stroke="none"/>
<rect x="692" y="237" width="30" height="3" fill="#00ffff" stroke="none"/>
<rect x="722" y="237" width="17" height="3" fill="#ffff00" stroke="none"/>
<rect x="722" y="238" width="17" height="1" fill="#ff00ff" stroke="none"/>
<path stroke="#ffff00" fill="none" d="M686 240L688 243H693L695 240M720 240L722 243H727L729 240"/>
<rect x="737.5" y="197.5" width="8" height="19" stroke="#ffff00" fill="none"/>
<rect x="739.5" y="200.5" width="4" height="13" stroke="#ffff00" fill="none"/>
<path stroke="#00ffff" fill="none" d="M744.5 192L751.5 192L751.5 221L744.5 221"/>
<path stroke="#00ffff" d="M744.5 197L751.5 192"/>
<path stroke="#00ffff" d="M744.5 216L751.5 221"/>
<path stroke="#00ffff" d="M737 240L744.5 245.5"/>
<rect x="652" y="180" width="3" height="78" fill="#ffff00" stroke="none"/>
<rect x="653" y="180" width="1" height="78" fill="#ff00ff" stroke="none"/>
<rect x="675" y="236" width="3" height="22" fill="#ffff00" stroke="none"/>
<rect x="676" y="236" width="1" height="22" fill="#ff00ff" stroke="none"/>
<path stroke="#ff00ff" d="M676.5 180L676.5 236"/>
<circle cx="676" cy="187.5" r="1.5" stroke="#ffff00" fill="none"/>
<circle cx="676" cy="226.5" r="1.5" stroke="#ffff00" fill="none"/>
<rect x="655" y="237" width="5" height="3" fill="#ffff00" stroke="none"/>
<rect x="655" y="238" width="5" height="1" fill="#ff00ff" stroke="none"/>
<rect x="670" y="237" width="7" height="3" fill="#ffff00" stroke="none"/>
<rect x="670" y="238" width="7" height="1" fill="#ff00ff" stroke="none"/>
<rect x="650.5" y="256.5" width="5" height="4" stroke="#ffff00" fill="none"/>
<rect x="674.5" y="256.5" width="5" height="4" stroke="#ffff00" fill="none"/>
<rect x="649.5" y="257.5" width="31" height="13" stroke="#00ffff" fill="none"/>
<rect x="652.5" y="261.5" width="25" height="6" stroke="#00ffff" fill="none"/>
<path stroke="#00ffff" d="M652 264.5L677 264.5"/>
<path stroke="#00ffff" d="M648.5 240L648.5 258"/>
<path stroke="#00ffff" d="M640 240.5L653 240.5"/>
<path stroke="#00ffff" d="M620.5 170L620.5 179"/>
<path stroke="#00ffff" d="M622.5 170L622.5 179"/>
<path stroke="#00ffff" d="M624.5 170L624.5 179"/>
<path stroke="#00ffff" d="M626.5 170L626.5 179"/>
<path stroke="#00ffff" d="M628.5 170L628.5 179"/>
<path stroke="#00ffff" d="M630.5 170L630.5 179"/>
<path stroke="#00ffff" d="M633.5 170L633.5 179"/>
<path stroke="#00ffff" d="M635.5 170L635.5 179"/>
<path stroke="#00ffff" d="M622.5 179L622.5 192"/>
<path stroke="#00ffff" d="M624.5 179L624.5 192"/>
<path stroke="#00ffff" d="M626.5 179L626.5 192"/>
<path stroke="#00ffff" d="M629 180.5L652 180.5"/>
<path stroke="#00ffff" d="M629 182.5L652 182.5"/>
<path stroke="#00ffff" d="M636 176L642 181"/>
<path stroke="#00ffff" d="M626 186.5L630 186.5"/>
<path stroke="#ffff00" stroke-width="2" d="M614 180L623 180"/>
<path stroke="#ffff00" d="M607 171.5L637 171.5"/>
<path stroke="#ffff00" d="M607.5 171L607.5 193"/>
<path stroke="#ff00ff" d="M637.5 158L637.5 192"/>
<path stroke="#00ffff" fill="none" d="M608 172Q613 174 614 180H608"/>
<path stroke="#00ffff" fill="none" d="M608 183Q614 185 615 192"/>
<path stroke="#00ffff" fill="none" d="M641 147Q646 148 652 154"/>
<path stroke="#00ffff" fill="none" d="M629 165Q631 158 637 157"/>
<path stroke="#00ffff" fill="none" d="M656 156Q663 157 664 164H656"/>
<path stroke="#00ffff" fill="none" d="M655 167Q661 168 661 174H655"/>
<path stroke="#00ffff" fill="none" d="M643 207Q645 213 651 214V206"/>
<path stroke="#00ffff" fill="none" d="M657 238V230L662 238M668 238V230L663 238"/>
<rect x="597.5" y="147.5" width="23" height="13" stroke="#b4b4b4" fill="none"/>
<rect x="598.5" y="149.5" width="21" height="9" stroke="#b4b4b4" fill="none"/>
<rect x="631.5" y="129.5" width="6" height="7" stroke="#b4b4b4" fill="none"/>
<path stroke="#b4b4b4" d="M631 129L637 136"/>
<path stroke="#b4b4b4" d="M637 129L631 136"/>
<rect x="639.5" y="129.5" width="12" height="4" stroke="#b4b4b4" fill="none"/>
<rect x="631.5" y="138.5" width="4" height="5" stroke="#b4b4b4" fill="none"/>
<path stroke="#b4b4b4" fill="none" d="M630 146H642L638 153H630Z"/>
<rect x="657.5" y="141.5" width="4" height="23" stroke="#b4b4b4" fill="none"/>
<rect x="668" y="142" width="3" height="22" fill="#b4b4b4" stroke="none"/>
<rect x="674.5" y="139.5" width="4" height="13" stroke="#b4b4b4" fill="none"/>
<rect x="690.5" y="138.5" width="8" height="4" stroke="#b4b4b4" fill="none"/>
<rect x="686.5" y="170.5" width="13" height="6" stroke="#b4b4b4" fill="none"/>
<rect x="658.5" y="177.5" width="12" height="4" stroke="#b4b4b4" fill="none"/>
<circle cx="718" cy="157" r="5.5" stroke="#b4b4b4" fill="none"/>
<circle cx="718" cy="157" r="4" stroke="#b4b4b4" fill="none"/>
<circle cx="726.8" cy="160.6" r="2.8" stroke="#b4b4b4" fill="none"/>
<circle cx="721.6" cy="165.8" r="2.8" stroke="#b4b4b4" fill="none"/>
<circle cx="714.4" cy="165.8" r="2.8" stroke="#b4b4b4" fill="none"/>
<circle cx="709.2" cy="160.6" r="2.8" stroke="#b4b4b4" fill="none"/>
<circle cx="709.2" cy="153.4" r="2.8" stroke="#b4b4b4" fill="none"/>
<circle cx="714.4" cy="148.2" r="2.8" stroke="#b4b4b4" fill="none"/>
<circle cx="721.6" cy="148.2" r="2.8" stroke="#b4b4b4" fill="none"/>
<circle cx="726.8" cy="153.4" r="2.8" stroke="#b4b4b4" fill="none"/>
<rect x="733.5" y="149.5" width="3" height="17" stroke="#b4b4b4" fill="none"/>
<rect x="594.5" y="199.5" width="16" height="46" stroke="#b4b4b4" fill="none"/>
<rect x="596.5" y="202.5" width="12" height="10" stroke="#b4b4b4" fill="none"/>
<rect x="596.5" y="216.5" width="12" height="16" stroke="#b4b4b4" fill="none"/>
<rect x="594" y="199" width="16" height="2" fill="#b4b4b4" stroke="none"/>
<rect x="622" y="199" width="14" height="5" fill="#b4b4b4" stroke="none"/>
<rect x="626.5" y="213.5" width="14" height="16" stroke="#b4b4b4" fill="none"/>
<rect x="621" y="211" width="4" height="21" fill="#b4b4b4" stroke="none"/>
<path stroke="#b4b4b4" fill="none" d="M628 240Q631 236 634 240Q637 244 640 240Q643 236 645 241"/>
<rect x="646.5" y="217.5" width="6" height="21" stroke="#b4b4b4" fill="none"/>
<rect x="697.5" y="190.5" width="34" height="38" stroke="#b4b4b4" fill="none"/>
<rect x="694.5" y="199.5" width="9" height="19" stroke="#b4b4b4" fill="none"/>
<rect x="689.5" y="203.5" width="4" height="11" stroke="#b4b4b4" fill="none"/>
<rect x="711.5" y="204.5" width="10" height="9" stroke="#b4b4b4" fill="none"/>
<rect x="706.5" y="220.5" width="21" height="9" stroke="#b4b4b4" fill="none"/>
<rect x="709.5" y="189.5" width="5" height="5" stroke="#b4b4b4" fill="none"/>
<circle cx="719" cy="192" r="2.5" stroke="#b4b4b4" fill="none"/>
<path stroke="#b4b4b4" fill="none" d="M724 195L729 190L733 195L728 200Z"/>
<circle cx="702" cy="224" r="2.5" stroke="#b4b4b4" fill="none"/>
<rect x="677.5" y="232.5" width="11" height="5" stroke="#b4b4b4" fill="none"/>
<rect x="725.5" y="232.5" width="11" height="5" stroke="#b4b4b4" fill="none"/>
<text transform="translate(603 152) scale(-1 1)" font-size="5.5" fill="#ffffff" stroke="none" text-anchor="middle">12</text>
<text transform="translate(643 146) scale(-1 1)" font-size="5.5" fill="#ffffff" stroke="none" text-anchor="middle">2</text>
<text transform="translate(664 153) scale(-1 1)" font-size="5.5" fill="#ffffff" stroke="none" text-anchor="middle">12</text>
<text transform="translate(687 159) scale(-1 1)" font-size="5.5" fill="#ffffff" stroke="none" text-anchor="middle">2</text>
<text transform="translate(718 159) scale(-1 1)" font-size="5.5" fill="#ffffff" stroke="none" text-anchor="middle">3</text>
<text transform="translate(602 226) scale(-1 1)" font-size="5.5" fill="#ffffff" stroke="none" text-anchor="middle">5</text>
<text transform="translate(634 224) scale(-1 1)" font-size="5.5" fill="#ffffff" stroke="none" text-anchor="middle">6</text>
<text transform="translate(632.5 188)" font-size="5.5" fill="#ffffff" stroke="none" text-anchor="middle" font-weight="bold">r</text>
<text transform="translate(648 183.5) rotate(180)" font-size="5.5" fill="#ffffff" stroke="none" text-anchor="middle" font-weight="bold">T</text>
<rect x="658" y="195" width="9" height="3" fill="#00ff00" stroke="none"/>
<path stroke="#00ff00" fill="none" d="M667 197H670L668 200H666"/>
<path stroke="#ffffff" d="M237 331.5L371 331.5"/>
<path stroke="#ffffff" d="M237 340.5L371 340.5"/>
<path stroke="#ffffff" d="M237.5 329L237.5 346"/>
<path stroke="#ff00ff" d="M237.5 346L237.5 375"/>
<path stroke="#ffffff" d="M236 342L239 339"/>
<path stroke="#ffffff" d="M260 342L263 339"/>
<path stroke="#ffffff" d="M285 342L288 339"/>
<path stroke="#ffffff" d="M332 342L335 339"/>
<path stroke="#ffffff" d="M369 342L372 339"/>
<path stroke="#ffffff" d="M236 333L239 330"/>
<path stroke="#ffffff" d="M369 333L372 330"/>
<path stroke="#ffffff" d="M261.5 338L261.5 355"/>
<path stroke="#ff00ff" d="M261.5 355L261.5 361"/>
<path stroke="#ffffff" d="M286.5 338L286.5 355"/>
<path stroke="#ff00ff" d="M286.5 355L286.5 372"/>
<path stroke="#ffffff" d="M333.5 338L333.5 347"/>
<path stroke="#ff00ff" d="M333.5 347L333.5 375"/>
<path stroke="#ffffff" d="M370.5 329L370.5 516"/>
<text transform="translate(249 338.5) scale(-1 1)" font-size="6.5" fill="#ffffff" stroke="none" text-anchor="middle" font-weight="bold">3600</text>
<text transform="translate(274 338.5) scale(-1 1)" font-size="6.5" fill="#ffffff" stroke="none" text-anchor="middle" font-weight="bold">2400</text>
<text transform="translate(310 338.5) scale(-1 1)" font-size="6.5" fill="#ffffff" stroke="none" text-anchor="middle" font-weight="bold">4100</text>
<text transform="translate(352 338.5) scale(-1 1)" font-size="6.5" fill="#ffffff" stroke="none" text-anchor="middle" font-weight="bold">3520</text>
<text transform="translate(304 329.5) scale(-1 1)" font-size="6.5" fill="#ffffff" stroke="none" text-anchor="middle" font-weight="bold">11220</text>
<path stroke="#ffffff" d="M155.5 361L155.5 487"/>
<path stroke="#ffffff" d="M171.5 361L171.5 483"/>
<path stroke="#ffffff" d="M170 363L173 360"/>
<path stroke="#ffffff" d="M170 377L173 374"/>
<path stroke="#ffffff" d="M170 395L173 392"/>
<path stroke="#ffffff" d="M170 409L173 406"/>
<path stroke="#ffffff" d="M170 433L173 430"/>
<path stroke="#ffffff" d="M170 445L173 442"/>
<path stroke="#ffffff" d="M170 484L173 481"/>
<path stroke="#ffffff" d="M154 363L157 360"/>
<path stroke="#ffffff" d="M154 488L157 485"/>
<path stroke="#ffffff" d="M155 361.5L200 361.5"/>
<path stroke="#ff00ff" d="M200 361.5L258 361.5"/>
<path stroke="#ffffff" d="M171 375.5L200 375.5"/>
<path stroke="#ff00ff" d="M200 375.5L237 375.5"/>
<path stroke="#ffffff" d="M171 393.5L200 393.5"/>
<path stroke="#ff00ff" d="M200 393.5L262 393.5"/>
<path stroke="#ffffff" d="M171 407.5L200 407.5"/>
<path stroke="#ff00ff" d="M200 407.5L237 407.5"/>
<path stroke="#ffffff" d="M171 431.5L200 431.5"/>
<path stroke="#ff00ff" d="M200 431.5L253 431.5"/>
<path stroke="#ffffff" d="M171 443.5L201 443.5"/>
<path stroke="#ff00ff" d="M200 464.5L253 464.5"/>
<path stroke="#ffffff" d="M171 482.5L200 482.5"/>
<path stroke="#ff00ff" d="M200 482.5L253 482.5"/>
<path stroke="#ffffff" d="M155 486.5L253 486.5"/>
<text transform="translate(157 368) rotate(90) scale(-1 1)" font-size="6.5" fill="#ffffff" stroke="none" text-anchor="middle" font-weight="bold">1300</text>
<text transform="translate(173 384) rotate(90) scale(-1 1)" font-size="6.5" fill="#ffffff" stroke="none" text-anchor="middle" font-weight="bold">2000</text>
<text transform="translate(157 400) rotate(90) scale(-1 1)" font-size="6.5" fill="#ffffff" stroke="none" text-anchor="middle" font-weight="bold">1400</text>
<text transform="translate(173 419) rotate(90) scale(-1 1)" font-size="6.5" fill="#ffffff" stroke="none" text-anchor="middle" font-weight="bold">3600</text>
<text transform="translate(157 440) rotate(90) scale(-1 1)" font-size="6" fill="#ffffff" stroke="none" text-anchor="middle" font-weight="bold">13062300</text>
<text transform="translate(173 464) rotate(90) scale(-1 1)" font-size="6.5" fill="#ffffff" stroke="none" text-anchor="middle" font-weight="bold">4500</text>
<path stroke="#ffffff" d="M409.5 375L409.5 497"/>
<path stroke="#ffffff" d="M422.5 375L422.5 497"/>
<path stroke="#ffffff" d="M408 377L411 374"/>
<path stroke="#ffffff" d="M408 382L411 379"/>
<path stroke="#ffffff" d="M408 416L411 413"/>
<path stroke="#ffffff" d="M408 477L411 474"/>
<path stroke="#ffffff" d="M408 484L411 481"/>
<path stroke="#ffffff" d="M408 498L411 495"/>
<path stroke="#ffffff" d="M421 377L424 374"/>
<path stroke="#ffffff" d="M421 498L424 495"/>
<path stroke="#ff00ff" d="M334 375.5L380 375.5"/>
<path stroke="#ffffff" d="M380 375.5L423 375.5"/>
<path stroke="#ffffff" d="M378 380.5L410 380.5"/>
<path stroke="#ff00ff" d="M334 414.5L379 414.5"/>
<path stroke="#ffffff" d="M379 414.5L410 414.5"/>
<path stroke="#ffffff" d="M378 475.5L410 475.5"/>
<path stroke="#ffffff" d="M378 482.5L410 482.5"/>
<path stroke="#ffffff" d="M378 496.5L423 496.5"/>
<text transform="translate(411 378.5) rotate(90) scale(-1 1)" font-size="4.5" fill="#ffffff" stroke="none" text-anchor="middle" font-weight="bold">600</text>
<text transform="translate(411 397) rotate(90) scale(-1 1)" font-size="6.5" fill="#ffffff" stroke="none" text-anchor="middle" font-weight="bold">2800</text>
<text transform="translate(411 446) rotate(90) scale(-1 1)" font-size="6.5" fill="#ffffff" stroke="none" text-anchor="middle" font-weight="bold">5500</text>
<text transform="translate(424 436) rotate(90) scale(-1 1)" font-size="6.5" fill="#ffffff" stroke="none" text-anchor="middle" font-weight="bold">12000</text>
<text transform="translate(411 486) rotate(90) scale(-1 1)" font-size="5" fill="#ffffff" stroke="none" text-anchor="middle" font-weight="bold">13001200</text>
<path stroke="#ffffff" d="M207 516.5L371 516.5"/>
<path stroke="#ffffff" d="M219 523.5L371 523.5"/>
<path stroke="#ffffff" d="M206 518L209 515"/>
<path stroke="#ffffff" d="M218 518L221 515"/>
<path stroke="#ffffff" d="M236 518L239 515"/>
<path stroke="#ffffff" d="M251 518L254 515"/>
<path stroke="#ffffff" d="M269 518L272 515"/>
<path stroke="#ffffff" d="M285 518L288 515"/>
<path stroke="#ffffff" d="M307 518L310 515"/>
<path stroke="#ffffff" d="M369 518L372 515"/>
<path stroke="#ffffff" d="M218 525L221 522"/>
<path stroke="#ffffff" d="M369 525L372 522"/>
<path stroke="#ffffff" d="M207.5 479L207.5 518"/>
<path stroke="#ffffff" d="M219.5 472L219.5 525"/>
<path stroke="#ffffff" d="M237.5 454L237.5 518"/>
<path stroke="#ffffff" d="M252.5 487L252.5 518"/>
<path stroke="#ffffff" d="M270.5 487L270.5 518"/>
<path stroke="#ffffff" d="M286.5 487L286.5 518"/>
<path stroke="#ffffff" d="M308.5 487L308.5 518"/>
<text transform="translate(229 514.5) scale(-1 1)" font-size="6.5" fill="#ffffff" stroke="none" text-anchor="middle" font-weight="bold">3000</text>
<text transform="translate(245 514.5) scale(-1 1)" font-size="6" fill="#ffffff" stroke="none" text-anchor="middle" font-weight="bold">3600</text>
<text transform="translate(262 514.5) scale(-1 1)" font-size="6.5" fill="#ffffff" stroke="none" text-anchor="middle" font-weight="bold">1600</text>
<text transform="translate(278.5 514.5) scale(-1 1)" font-size="6" fill="#ffffff" stroke="none" text-anchor="middle" font-weight="bold">2700</text>
<text transform="translate(297 514.5) scale(-1 1)" font-size="6.5" fill="#ffffff" stroke="none" text-anchor="middle" font-weight="bold">2400</text>
<text transform="translate(340 514.5) scale(-1 1)" font-size="6.5" fill="#ffffff" stroke="none" text-anchor="middle" font-weight="bold">6800</text>
<text transform="translate(295 522) scale(-1 1)" font-size="6.5" fill="#ffffff" stroke="none" text-anchor="middle" font-weight="bold">16200</text>
<text transform="translate(213 530) scale(-1 1)" font-size="6.5" fill="#ffffff" stroke="none" text-anchor="middle" font-weight="bold">1320</text>
<text transform="translate(177.5 520.5) scale(-1 1)" font-size="6.5" fill="#ffffff" stroke="none" text-anchor="middle" textLength="44">三 层 平 面</text>
<text transform="translate(267 316) scale(-1 1)" font-size="6.5" fill="#ffffff" stroke="none" text-anchor="middle" textLength="44">二 层 平 面</text>
<path stroke="#00ffff" fill="none" d="M237 368.5L215.5 368.5L215.5 413.5L237 413.5"/>
<path stroke="#00ffff" fill="none" d="M215.5 368.5L239.5 368.5L239.5 372.5L258 372.5"/>
<path stroke="#00ffff" d="M215 390.5L237 390.5"/>
<path stroke="#00ffff" fill="none" d="M215.5 399.5L207.5 399.5L207.5 493.5L259.5 493.5L259.5 485"/>
<path stroke="#00ffff" d="M207.5 493.5L249.5 457"/>
<path stroke="#00ffff" fill="none" d="M237.5 432L237.5 454.5L249.5 454.5"/>
<path stroke="#00ffff" fill="none" d="M257.5 374L257.5 357.5L289.5 357.5L289.5 372.5L337.5 372.5L337.5 414"/>
<path stroke="#00ffff" fill="none" d="M338 373.5L376.5 373.5L376.5 482.5L317.5 482.5L312.5 475L312.5 446"/>
<rect x="369.5" y="436.5" width="8" height="17" stroke="#00ffff" fill="none"/>
<path stroke="#00ffff" fill="none" d="M376.5 428.5L335.5 428.5L335.5 414"/>
<path stroke="#00ffff" fill="none" d="M335.5 428.5L335.5 438.5L310 438.5"/>
<path stroke="#00ffff" fill="none" d="M310 436.5L332.5 436.5L332.5 416"/>
<path stroke="#00ffff" fill="none" d="M317.5 482.5L317.5 501.5L277.5 501.5L277.5 487"/>
<path stroke="#00ffff" d="M297.5 487L297.5 501"/>
<path stroke="#00ffff" fill="none" d="M249.5 446L249.5 484.5L312.5 484.5L312.5 446"/>
<rect x="250" y="481" width="62" height="4" fill="#00ffff" stroke="none"/>
<path stroke="#ff00ff" d="M253 482.5L309 482.5"/>
<path stroke="#00ffff" d="M251.5 446L251.5 485"/>
<path stroke="#00ffff" d="M253.5 446L253.5 485"/>
<path stroke="#00ffff" d="M309.5 446L309.5 485"/>
<rect x="306" y="447" width="4" height="16" fill="#00ffff" stroke="none"/>
<rect x="250.5" y="478.5" width="6" height="6" stroke="#00ffff" fill="none"/>
<rect x="306.5" y="478.5" width="5" height="6" stroke="#00ffff" fill="none"/>
<rect x="264" y="360" width="20" height="3" fill="#00ffff" stroke="none"/>
<path stroke="#ffff00" fill="none" d="M261 366V361.5H265M283 361.5H287V366"/>
<path stroke="#ff00ff" fill="none" d="M262 365V362.5H265M283 362.5H286V365"/>
<rect x="260" y="364" width="3" height="10" fill="#00ffff" stroke="none"/>
<rect x="286" y="364" width="3" height="10" fill="#00ffff" stroke="none"/>
<rect x="237" y="374" width="98" height="3" fill="#ffff00" stroke="none"/>
<rect x="237" y="375" width="98" height="1" fill="#ff00ff" stroke="none"/>
<rect x="261" y="375" width="3" height="19" fill="#ffff00" stroke="none"/>
<rect x="262" y="375" width="1" height="19" fill="#ff00ff" stroke="none"/>
<rect x="286" y="375" width="3" height="19" fill="#ffff00" stroke="none"/>
<rect x="287" y="375" width="1" height="19" fill="#ff00ff" stroke="none"/>
<rect x="262" y="392" width="9" height="3" fill="#ffff00" stroke="none"/>
<rect x="262" y="393" width="9" height="1" fill="#ff00ff" stroke="none"/>
<rect x="279" y="392" width="10" height="3" fill="#ffff00" stroke="none"/>
<rect x="279" y="393" width="10" height="1" fill="#ff00ff" stroke="none"/>
<path stroke="#ffff00" d="M280.5 377L280.5 392"/>
<rect x="236" y="375" width="3" height="33" fill="#ffff00" stroke="none"/>
<rect x="237" y="375" width="1" height="33" fill="#ff00ff" stroke="none"/>
<rect x="237" y="405" width="35" height="3" fill="#ffff00" stroke="none"/>
<rect x="237" y="406" width="35" height="1" fill="#ff00ff" stroke="none"/>
<rect x="332" y="375" width="3" height="40" fill="#ffff00" stroke="none"/>
<rect x="333" y="375" width="1" height="40" fill="#ff00ff" stroke="none"/>
<rect x="332" y="390" width="3" height="10" fill="#00ffff" stroke="none"/>
<rect x="285" y="413" width="50" height="3" fill="#ffff00" stroke="none"/>
<rect x="285" y="414" width="50" height="1" fill="#ff00ff" stroke="none"/>
<rect x="312" y="413" width="10" height="3" fill="#00ffff" stroke="none"/>
<path stroke="#ffff00" fill="none" d="M238 432V412Q238 408 243 408"/>
<path stroke="#ff00ff" d="M237.5 408L237.5 432"/>
<rect x="236" y="415" width="3" height="8" fill="#00ffff" stroke="none"/>
<path stroke="#ffff00" fill="none" d="M241 424Q241 430 247 430"/>
<rect x="237" y="430" width="17" height="3" fill="#ffff00" stroke="none"/>
<rect x="237" y="431" width="17" height="1" fill="#ff00ff" stroke="none"/>
<path stroke="#00ffff" d="M250.5 408L250.5 430"/>
<path stroke="#00ffff" d="M252.5 408L252.5 430"/>
<path stroke="#00ffff" d="M254.5 408L254.5 430"/>
<path stroke="#00ffff" d="M256.5 408L256.5 430"/>
<path stroke="#00ffff" d="M258.5 408L258.5 430"/>
<path stroke="#00ffff" d="M260.5 408L260.5 430"/>
<path stroke="#00ffff" d="M262.5 408L262.5 430"/>
<path stroke="#00ffff" d="M264.5 408L264.5 430"/>
<path stroke="#00ffff" d="M266.5 408L266.5 430"/>
<path stroke="#00ffff" d="M268.5 408L268.5 430"/>
<rect x="244.5" y="413.5" width="26" height="11" stroke="#00ffff" fill="none"/>
<rect x="250" y="418" width="18" height="2" fill="#00ffff" stroke="none"/>
<rect x="252" y="431" width="3" height="16" fill="#ffff00" stroke="none"/>
<rect x="253" y="431" width="1" height="16" fill="#ff00ff" stroke="none"/>
<rect x="308" y="414" width="3" height="33" fill="#ffff00" stroke="none"/>
<rect x="309" y="414" width="1" height="33" fill="#ff00ff" stroke="none"/>
<path stroke="#00ffff" stroke-width="2" d="M253 465L310 465"/>
<path stroke="#ff00ff" d="M257 464.5L305 464.5"/>
<rect x="253.5" y="462.5" width="4" height="5" stroke="#ffff00" fill="none"/>
<rect x="305.5" y="462.5" width="5" height="5" stroke="#ffff00" fill="none"/>
<rect x="271" y="463" width="3" height="4" fill="#ffff00" stroke="none"/>
<rect x="288" y="463" width="3" height="4" fill="#ffff00" stroke="none"/>
<rect x="253.5" y="444.5" width="3" height="3" stroke="#ffff00" fill="none"/>
<rect x="307.5" y="444.5" width="3" height="3" stroke="#ffff00" fill="none"/>
<path stroke="#00ffff" fill="none" d="M271 385Q276 386 278 393H271V385"/>
<path stroke="#00ffff" fill="none" d="M270 397Q263 398 262 404H270"/>
<path stroke="#00ffff" fill="none" d="M275 408L280 404H288L283 414Z"/>
<rect x="265.5" y="365.5" width="18" height="9" stroke="#b4b4b4" fill="none"/>
<rect x="268.5" y="367.5" width="13" height="6" stroke="#b4b4b4" fill="none"/>
<rect x="240" y="377" width="5" height="28" fill="#b4b4b4" stroke="none"/>
<rect x="245" y="377" width="15" height="4" fill="#b4b4b4" stroke="none"/>
<rect x="255" y="381" width="5" height="12" fill="#b4b4b4" stroke="none"/>
<path stroke="#000" d="M241 379.5L244 379.5"/>
<path stroke="#000" d="M241 382.5L244 382.5"/>
<path stroke="#000" d="M241 385.5L244 385.5"/>
<path stroke="#000" d="M241 388.5L244 388.5"/>
<path stroke="#000" d="M241 391.5L244 391.5"/>
<path stroke="#000" d="M241 394.5L244 394.5"/>
<path stroke="#000" d="M241 397.5L244 397.5"/>
<path stroke="#000" d="M241 400.5L244 400.5"/>
<path stroke="#000" d="M241 403.5L244 403.5"/>
<rect x="263.5" y="378.5" width="5" height="4" stroke="#b4b4b4" fill="none"/>
<rect x="264.5" y="386.5" width="6" height="6" stroke="#b4b4b4" fill="none"/>
<path stroke="#b4b4b4" d="M264 386L270 392"/>
<path stroke="#b4b4b4" d="M270 386L264 392"/>
<path stroke="#b4b4b4" fill="none" d="M283 382L285 385L283 388L281 385Z"/>
<rect x="288.5" y="379.5" width="5" height="12" stroke="#b4b4b4" fill="none"/>
<rect x="303.5" y="380.5" width="15" height="16" stroke="#b4b4b4" fill="none"/>
<rect x="298" y="377" width="24" height="3" fill="#b4b4b4" stroke="none"/>
<rect x="304.5" y="397.5" width="12" height="4" stroke="#b4b4b4" fill="none"/>
<path stroke="#b4b4b4" d="M313 380L318 385"/>
<circle cx="328" cy="388" r="2.5" stroke="#b4b4b4" fill="none"/>
<circle cx="328" cy="395" r="2.5" stroke="#b4b4b4" fill="none"/>
<circle cx="328" cy="402" r="2.5" stroke="#b4b4b4" fill="none"/>
<rect x="294.5" y="408.5" width="12" height="5" stroke="#b4b4b4" fill="none"/>
<rect x="262.5" y="441.5" width="9" height="20" stroke="#b4b4b4" fill="none"/>
<path stroke="#b4b4b4" d="M262 448.5L271 448.5"/>
<path stroke="#b4b4b4" d="M262 454.5L271 454.5"/>
<rect x="264.5" y="443.5" width="5" height="16" stroke="#b4b4b4" fill="none"/>
<rect x="292.5" y="441.5" width="10" height="20" stroke="#b4b4b4" fill="none"/>
<path stroke="#b4b4b4" d="M292 448.5L302 448.5"/>
<path stroke="#b4b4b4" d="M292 454.5L302 454.5"/>
<rect x="294.5" y="443.5" width="6" height="16" stroke="#b4b4b4" fill="none"/>
<rect x="277.5" y="445.5" width="9" height="12" stroke="#b4b4b4" fill="none"/>
<rect x="278.5" y="446.5" width="7" height="10" stroke="#b4b4b4" fill="none"/>
<circle cx="268" cy="437" r="3" stroke="#b4b4b4" fill="none"/>
<circle cx="268" cy="437" r="1.5" stroke="#b4b4b4" fill="none"/>
<rect x="279.5" y="437.5" width="2" height="3" stroke="#b4b4b4" fill="none"/>
<path stroke="#b4b4b4" fill="none" d="M287 427L295 433L290 440L282 434Z"/>
<circle cx="295" cy="436" r="3" stroke="#b4b4b4" fill="none"/>
<path stroke="#b4b4b4" fill="none" d="M293 422Q297 419 301 422M291 426Q294 423 297 426M296 429Q299 426 302 429"/>
<path stroke="#b4b4b4" fill="none" d="M299 420Q302 426 308 428M303 420Q305 424 308 425"/>
<text transform="translate(251 402) scale(-1 1)" font-size="6" fill="#ffffff" stroke="none" text-anchor="middle">12</text>
<text transform="translate(308 391) scale(-1 1)" font-size="6" fill="#ffffff" stroke="none" text-anchor="middle">14</text>
<text transform="translate(275 382) scale(-1 1)" font-size="6" fill="#ffffff" stroke="none" text-anchor="middle">2</text>
<text transform="translate(275 428)" font-size="5" fill="#ffffff" stroke="none" text-anchor="middle">1</text>
<text transform="translate(299 479)" font-size="4.5" fill="#ffffff" stroke="none" text-anchor="middle" font-weight="bold">3F</text>
<rect x="275" y="417" width="8" height="3" fill="#00ff00" stroke="none"/>
<path stroke="#00ff00" fill="none" d="M283 419H286L284 422H282"/>
<path stroke="#ffffff" d="M492 441.5L793 441.5"/>
<text transform="translate(527 455.5) scale(-1 1)" font-size="6.5" fill="#ffffff" stroke="none" text-anchor="middle" textLength="31">正 立 面</text>
<path stroke="#00ff00" d="M631 330.5L583 357.5"/>
<path stroke="#00ff00" d="M631 330.5L666 350"/>
<path stroke="#00ff00" d="M631 332.5L583 359.5"/>
<path stroke="#00ff00" d="M631 332.5L666 352"/>
<path stroke="#00ff00" d="M631 335.5L605 350"/>
<path stroke="#00ff00" d="M631 335.5L660 350"/>
<rect x="625.5" y="326.5" width="7" height="2" stroke="#00ff00" fill="none"/>
<path stroke="#00ff00" d="M627 329.5L631 329.5"/>
<path stroke="#00ff00" fill="none" d="M583 357.5L583 360L588.5 360L588.5 390"/>
<path stroke="#00ff00" d="M590.5 358L590.5 390"/>
<path stroke="#00ff00" d="M640 334.5L691 334.5"/>
<path stroke="#00ff00" d="M691.5 332L691.5 351"/>
<rect x="691.5" y="330.5" width="8" height="3" stroke="#00ff00" fill="none"/>
<path stroke="#00ff00" d="M666 350.5L691 350.5"/>
<path stroke="#00ff00" fill="none" d="M608.5 348.5L608.5 343L622.5 336L622.5 348.5Z"/>
<path stroke="#00ff00" fill="none" d="M625.5 348.5L625.5 335L631 332.5L639.5 336.5L639.5 348.5Z"/>
<path stroke="#00ff00" fill="none" d="M642.5 348.5L642.5 338L660 348.5Z"/>
<rect x="608.5" y="352.5" width="14" height="14" stroke="#00ff00" fill="none"/>
<path stroke="#00ff00" d="M608 355.5L622 355.5"/>
<path stroke="#00ff00" d="M615.5 355L615.5 366"/>
<rect x="625.5" y="352.5" width="14" height="14" stroke="#00ff00" fill="none"/>
<path stroke="#00ff00" d="M625 355.5L639 355.5"/>
<path stroke="#00ff00" d="M632.5 355L632.5 366"/>
<rect x="642.5" y="352.5" width="13" height="14" stroke="#00ff00" fill="none"/>
<path stroke="#00ff00" d="M642 355.5L655 355.5"/>
<path stroke="#00ff00" d="M648.5 355L648.5 366"/>
<rect x="664.5" y="352.5" width="19" height="14" stroke="#00ff00" fill="none"/>
<path stroke="#00ff00" d="M664 355.5L683 355.5"/>
<path stroke="#00ff00" d="M673.5 355L673.5 366"/>
<path stroke="#00ff00" d="M603.5 350L603.5 441"/>
<path stroke="#00ff00" d="M605.5 350L605.5 441"/>
<rect x="660" y="350" width="3" height="22" fill="#00ff00" stroke="none"/>
<path stroke="#00ff00" d="M686.5 351L686.5 372"/>
<rect x="603.5" y="366.5" width="57" height="7" stroke="#00ff00" fill="none"/>
<rect x="601" y="374" width="62" height="4" fill="#00ff00" stroke="none"/>
<path stroke="#00ff00" d="M603 380.5L660 380.5"/>
<path stroke="#00ff00" d="M686 367.5L720 367.5"/>
<path stroke="#00ff00" d="M662 371.5L686 371.5"/>
<rect x="705.5" y="363.5" width="9" height="3" stroke="#00ff00" fill="none"/>
<path stroke="#00ff00" d="M709.5 360L709.5 363"/>
<rect x="719.5" y="343.5" width="10" height="34" stroke="#00ff00" fill="none"/>
<path stroke="#00ff00" d="M719 352.5L729 352.5"/>
<rect x="713" y="339" width="9" height="3" fill="#00ff00" stroke="none"/>
<path stroke="#00ff00" d="M729.5 377L729.5 441"/>
<path stroke="#00ff00" d="M727.5 352L727.5 441"/>
<rect x="608.5" y="381.5" width="15" height="14" stroke="#00ff00" fill="none"/>
<path stroke="#00ff00" d="M615.5 381L615.5 395"/>
<rect x="610.5" y="383.5" width="11" height="10" stroke="#00ff00" fill="none"/>
<rect x="566.5" y="364.5" width="22" height="13" stroke="#00ff00" fill="none"/>
<rect x="559.5" y="360.5" width="7" height="2" stroke="#00ff00" fill="none"/>
<path stroke="#00ff00" d="M566.5 362L566.5 364"/>
<path stroke="#00ff00" d="M566 378.5L588 378.5"/>
<path stroke="#00ff00" d="M572.5 378L572.5 402"/>
<rect x="575.5" y="381.5" width="10" height="13" stroke="#00ff00" fill="none"/>
<rect x="577.5" y="383.5" width="6" height="9" stroke="#00ff00" fill="none"/>
<path stroke="#00ff00" d="M564 405.5L603 387.5"/>
<path stroke="#00ff00" d="M566 406.5L603 389.5"/>
<rect x="564.5" y="405.5" width="47" height="3" stroke="#00ff00" fill="none"/>
<rect x="569.5" y="409.5" width="36" height="32" stroke="#00ff00" fill="none"/>
<rect x="574.5" y="415.5" width="27" height="26" stroke="#00ff00" fill="none"/>
<path stroke="#00ff00" d="M574 417.5L601 417.5"/>
<path stroke="#00ff00" d="M569 428.5L574 428.5"/>
<path stroke="#00ff00" d="M569 435.5L574 435.5"/>
<path stroke="#00ff00" d="M602 428.5L634 428.5"/>
<path stroke="#00ff00" d="M602 435.5L634 435.5"/>
<rect x="607.5" y="409.5" width="16" height="16" stroke="#00ff00" fill="none"/>
<path stroke="#00ff00" d="M615.5 409L615.5 425"/>
<rect x="609.5" y="411.5" width="12" height="12" stroke="#00ff00" fill="none"/>
<path stroke="#00ff00" d="M649 380.5L628 392"/>
<path stroke="#00ff00" d="M649 380.5L669 392"/>
<path stroke="#00ff00" d="M649 382.5L628 394"/>
<path stroke="#00ff00" d="M649 382.5L669 394"/>
<path stroke="#00ff00" d="M649 386L633 395"/>
<path stroke="#00ff00" d="M649 386L665 395"/>
<path stroke="#00ff00" d="M630 395.5L668 395.5"/>
<path stroke="#00ff00" fill="none" d="M639 410V405Q639 396 649 396Q659 396 659 405V410"/>
<path stroke="#00ff00" fill="none" d="M637 410V404Q637 393.5 649 393.5Q661 393.5 661 404V410"/>
<circle cx="649" cy="400.5" r="4" stroke="#00ff00" fill="#00ff00"/>
<rect x="634.5" y="398.5" width="4" height="37" stroke="#00ff00" fill="none"/>
<rect x="659.5" y="398.5" width="3" height="37" stroke="#00ff00" fill="none"/>
<rect x="633" y="396" width="7" height="2" fill="#00ff00" stroke="none"/>
<rect x="658" y="396" width="6" height="2" fill="#00ff00" stroke="none"/>
<rect x="640.5" y="412.5" width="17" height="26" stroke="#00ff00" fill="none"/>
<rect x="642.5" y="414.5" width="13" height="24" stroke="#00ff00" fill="none"/>
<path stroke="#00ff00" stroke-width="2" d="M645 432L652 432"/>
<rect x="633.5" y="435.5" width="31" height="3" stroke="#00ff00" fill="none"/>
<rect x="630.5" y="438.5" width="37" height="3" stroke="#00ff00" fill="none"/>
<path stroke="#00ff00" d="M668 391.5L729 391.5"/>
<path stroke="#00ff00" d="M668 393.5L729 393.5"/>
<path stroke="#00ff00" fill="#00ff00" d="M722 390L724 386L726 390Z"/>
<rect x="675.5" y="397.5" width="30" height="31" stroke="#00ff00" fill="none"/>
<rect x="677.5" y="399.5" width="26" height="27" stroke="#00ff00" fill="none"/>
<path stroke="#00ff00" d="M675 404.5L705 404.5"/>
<path stroke="#00ff00" d="M675 407.5L705 407.5"/>
<path stroke="#00ff00" d="M675 424.5L705 424.5"/>
<path stroke="#00ff00" d="M683.5 397L683.5 428"/>
<path stroke="#00ff00" d="M698.5 397L698.5 428"/>
<path stroke="#00ff00" fill="none" d="M683 409L677 416L683 423"/>
<path stroke="#00ff00" fill="none" d="M698 409L704 416L698 423"/>
<rect x="669.5" y="393.5" width="6" height="48" stroke="#00ff00" fill="none"/>
<rect x="706.5" y="393.5" width="6" height="48" stroke="#00ff00" fill="none"/>
<path stroke="#00ff00" d="M722.5 393L722.5 441"/>
<path stroke="#00ff00" d="M662 428.5L729 428.5"/>
<path stroke="#00ff00" d="M662 433.5L729 433.5"/>
<path stroke="#00ffff" fill="none" d="M537 441L538 413"/>
<path stroke="#00ffff" fill="none" d="M543 441L541.5 413"/>
<path stroke="#00ffff" d="M537.1 438.5L543.8 438.5"/>
<path stroke="#00ffff" d="M537.2 433.5L543.5 433.5"/>
<path stroke="#00ffff" d="M537.4 428.5L543.2 428.5"/>
<path stroke="#00ffff" d="M537.5 423.5L542.8 423.5"/>
<path stroke="#00ffff" d="M537.7 418.5L542.5 418.5"/>
<path stroke="#00ffff" fill="none" d="M539.5 410L537.7 407.5L535.9 405.1L534.1 402.7L532.2 400.3L530.2 398L528.2 395.7L526.1 393.5L524 391.3L521.8 389.2"/>
<path stroke="#00ffff" d="M535.9 405.1L536.3 398.3"/>
<path stroke="#00ffff" d="M535.9 405.1L529.4 403.1"/>
<path stroke="#00ffff" d="M534.1 402.7L534.4 393.4"/>
<path stroke="#00ffff" d="M534.1 402.7L525.2 400.1"/>
<path stroke="#00ffff" d="M532.2 400.3L532.4 389"/>
<path stroke="#00ffff" d="M532.2 400.3L521.2 397.4"/>
<path stroke="#00ffff" d="M530.2 398L530.2 387.8"/>
<path stroke="#00ffff" d="M530.2 398L520.3 395.6"/>
<path stroke="#00ffff" d="M528.2 395.7L528 388.4"/>
<path stroke="#00ffff" d="M528.2 395.7L521 394.2"/>
<path stroke="#00ffff" d="M526.1 393.5L525.7 387.3"/>
<path stroke="#00ffff" d="M526.1 393.5L520 392.4"/>
<path stroke="#00ffff" d="M524 391.3L523.3 384.5"/>
<path stroke="#00ffff" d="M524 391.3L517.2 390.3"/>
<path stroke="#00ffff" fill="none" d="M536.3 398.3L535.2 399.5L534.4 393.4L533.3 395.8L532.4 389L531.2 393.2L530.2 387.8L529.1 392L528 388.4L527 390.9L525.7 387.3L524.8 388.8L523.3 384.5L521.8 389.2"/>
<path stroke="#00ffff" fill="none" d="M529.4 403.1L530.8 402.6L525.2 400.1L527.7 400L521.2 397.4L525.4 397.7L520.3 395.6L524.5 395.8L521 394.2L523.5 393.9L520 392.4L521.5 391.8L517.2 390.3L521.8 389.2"/>
<path stroke="#00ffff" fill="none" d="M539.5 410L541.1 407.3L542.8 404.5L544.5 401.9L546.3 399.2L548.1 396.6L550 394.1L552 391.6L554 389.1L556 386.7"/>
<path stroke="#00ffff" d="M542.8 404.5L548.7 402.2"/>
<path stroke="#00ffff" d="M542.8 404.5L541.9 398.2"/>
<path stroke="#00ffff" d="M544.5 401.9L555.4 397.6"/>
<path stroke="#00ffff" d="M544.5 401.9L543 390.2"/>
<path stroke="#00ffff" d="M546.3 399.2L556.9 395.3"/>
<path stroke="#00ffff" d="M546.3 399.2L545 388"/>
<path stroke="#00ffff" d="M548.1 396.6L558.8 393"/>
<path stroke="#00ffff" d="M548.1 396.6L547.1 385.3"/>
<path stroke="#00ffff" d="M550 394.1L558.5 391.4"/>
<path stroke="#00ffff" d="M550 394.1L549.5 385.2"/>
<path stroke="#00ffff" d="M552 391.6L559.7 389.4"/>
<path stroke="#00ffff" d="M552 391.6L551.7 383.5"/>
<path stroke="#00ffff" d="M554 389.1L559.6 387.8"/>
<path stroke="#00ffff" d="M554 389.1L554 383.3"/>
<path stroke="#00ffff" fill="none" d="M548.7 402.2L548.3 401.4L555.4 397.6L551.3 398.3L556.9 395.3L553.1 395.9L558.8 393L554.3 393.6L558.5 391.4L555.5 391.5L559.7 389.4L556.7 389.4L559.6 387.8L556 386.7"/>
<path stroke="#00ffff" fill="none" d="M541.9 398.2L543 398.3L543 390.2L544.6 394.2L545 388L546.6 391.7L547.1 385.3L548.6 389.8L549.5 385.2L550.8 388.2L551.7 383.5L552.9 386.5L554 383.3L556 386.7"/>
<path stroke="#00ffff" fill="none" d="M539.5 410L536.4 409.7L533.2 409.7L530 410.1L526.9 410.8L523.8 411.9L520.9 413.4L518 415.2"/>
<path stroke="#00ffff" d="M533.2 409.7L527.6 404.3"/>
<path stroke="#00ffff" d="M533.2 409.7L526.6 413.9"/>
<path stroke="#00ffff" d="M530 410.1L522.8 404.3"/>
<path stroke="#00ffff" d="M530 410.1L522.7 415.6"/>
<path stroke="#00ffff" d="M526.9 410.8L519.7 406.2"/>
<path stroke="#00ffff" d="M526.9 410.8L520.7 416.7"/>
<path stroke="#00ffff" d="M523.8 411.9L517.4 409.1"/>
<path stroke="#00ffff" d="M523.8 411.9L519.5 417.5"/>
<path stroke="#00ffff" d="M520.9 413.4L516.3 412.3"/>
<path stroke="#00ffff" d="M520.9 413.4L518.7 417.6"/>
<path stroke="#00ffff" fill="none" d="M527.6 404.3L528.1 406.8L522.8 404.3L524.5 407.6L519.7 406.2L521.6 409.3L517.4 409.1L519.3 411.6L516.3 412.3L518 415.2"/>
<path stroke="#00ffff" fill="none" d="M526.6 413.9L527.8 412.6L522.7 415.6L524.7 413.6L520.7 416.7L522.5 414.5L519.5 417.5L520.5 415.3L518.7 417.6L518 415.2"/>
<path stroke="#00ffff" fill="none" d="M539.5 410L542.8 409.9L546 410L549.3 410.5L552.5 411.4L555.6 412.5L558.7 414L561.6 415.8"/>
<path stroke="#00ffff" d="M546 410L552.1 414.4"/>
<path stroke="#00ffff" d="M546 410L551.8 405.2"/>
<path stroke="#00ffff" d="M549.3 410.5L556.2 416.3"/>
<path stroke="#00ffff" d="M549.3 410.5L556.6 405.2"/>
<path stroke="#00ffff" d="M552.5 411.4L557.5 416.4"/>
<path stroke="#00ffff" d="M552.5 411.4L558.6 407.8"/>
<path stroke="#00ffff" d="M555.6 412.5L560.4 418.8"/>
<path stroke="#00ffff" d="M555.6 412.5L562.9 409.5"/>
<path stroke="#00ffff" d="M558.7 414L561.4 419"/>
<path stroke="#00ffff" d="M558.7 414L564.2 412.6"/>
<path stroke="#00ffff" fill="none" d="M552.1 414.4L551.2 413.1L556.2 416.3L554.2 413.9L557.5 416.4L556.7 415.1L560.4 418.8L559.2 416.4L561.4 419L561.6 415.8"/>
<path stroke="#00ffff" fill="none" d="M551.8 405.2L551.3 407.5L556.6 405.2L554.6 408.5L558.6 407.8L557.8 410.1L562.9 409.5L560.7 412L564.2 412.6L561.6 415.8"/>
<path stroke="#00ffff" fill="none" d="M539.5 410L537.5 412.5L535.5 414.9L533.3 417.3L531.1 419.5L528.7 421.7L526.3 423.8L523.8 425.8L521.2 427.8"/>
<path stroke="#00ffff" d="M535.5 414.9L528.4 416.7"/>
<path stroke="#00ffff" d="M535.5 414.9L535.4 422.2"/>
<path stroke="#00ffff" d="M533.3 417.3L523.5 419.4"/>
<path stroke="#00ffff" d="M533.3 417.3L533 427.3"/>
<path stroke="#00ffff" d="M531.1 419.5L521 421.4"/>
<path stroke="#00ffff" d="M531.1 419.5L530.4 429.8"/>
<path stroke="#00ffff" d="M528.7 421.7L521.2 422.8"/>
<path stroke="#00ffff" d="M528.7 421.7L527.9 429.3"/>
<path stroke="#00ffff" d="M526.3 423.8L519 424.5"/>
<path stroke="#00ffff" d="M526.3 423.8L525.2 431.1"/>
<path stroke="#00ffff" d="M523.8 425.8L518.3 426"/>
<path stroke="#00ffff" d="M523.8 425.8L522.6 431.2"/>
<path stroke="#00ffff" fill="none" d="M528.4 416.7L529.7 417.2L523.5 419.4L526.7 419.5L521 421.4L525.1 421.4L521.2 422.8L523.4 423.3L519 424.5L521.5 425.1L518.3 426L521.2 427.8"/>
<path stroke="#00ffff" fill="none" d="M535.4 422.2L534.3 420.9L533 427.3L531.9 424L530.4 429.8L529.5 425.5L527.9 429.3L527 426.9L525.2 431.1L524.4 428.3L522.6 431.2L521.2 427.8"/>
<path stroke="#00ffff" fill="none" d="M539.5 410L541.3 412.8L543.2 415.6L545.2 418.3L547.3 420.9L549.5 423.4L551.9 425.8L554.3 428.1"/>
<path stroke="#00ffff" d="M543.2 415.6L542.4 423.1"/>
<path stroke="#00ffff" d="M543.2 415.6L550.3 418.2"/>
<path stroke="#00ffff" d="M545.2 418.3L544.6 426"/>
<path stroke="#00ffff" d="M545.2 418.3L552.5 420.7"/>
<path stroke="#00ffff" d="M547.3 420.9L547.1 427.7"/>
<path stroke="#00ffff" d="M547.3 420.9L553.8 422.7"/>
<path stroke="#00ffff" d="M549.5 423.4L549.7 429.3"/>
<path stroke="#00ffff" d="M549.5 423.4L555.3 424.7"/>
<path stroke="#00ffff" d="M551.9 425.8L552.4 431.9"/>
<path stroke="#00ffff" d="M551.9 425.8L557.9 426.7"/>
<path stroke="#00ffff" fill="none" d="M542.4 423.1L543.8 421.1L544.6 426L546 423.6L547.1 427.7L548.4 425.6L549.7 429.3L550.9 427.9L552.4 431.9L554.3 428.1"/>
<path stroke="#00ffff" fill="none" d="M550.3 418.2L548.1 418.3L552.5 420.7L550 420.8L553.8 422.7L551.8 423L555.3 424.7L553.9 425.2L557.9 426.7L554.3 428.1"/>
<path stroke="#00ffff" fill="none" d="M539.5 410L539.5 406.9L539.4 403.8L539.4 400.6L539.4 397.5L539.3 394.4"/>
<path stroke="#00ffff" d="M539.4 403.8L543.5 398.5"/>
<path stroke="#00ffff" d="M539.4 403.8L535.3 398.6"/>
<path stroke="#00ffff" d="M539.4 400.6L542.4 396.7"/>
<path stroke="#00ffff" d="M539.4 400.6L536.3 396.8"/>
<path stroke="#00ffff" d="M539.4 397.5L541.9 394.2"/>
<path stroke="#00ffff" d="M539.4 397.5L536.8 394.3"/>
<path stroke="#00ffff" fill="none" d="M543.5 398.5L541.3 399.7L542.4 396.7L540.9 397.1L541.9 394.2L539.3 394.4"/>
<path stroke="#00ffff" fill="none" d="M535.3 398.6L537.4 399.7L536.3 396.8L537.8 397.1L536.8 394.3L539.3 394.4"/>
<path stroke="#00ffff" fill="none" d="M741 441L744 416"/>
<path stroke="#00ffff" fill="none" d="M747 441L747.5 416"/>
<path stroke="#00ffff" d="M741.3 438.5L748 438.5"/>
<path stroke="#00ffff" d="M741.9 433.5L748.1 433.5"/>
<path stroke="#00ffff" d="M742.5 428.5L748.1 428.5"/>
<path stroke="#00ffff" d="M743 423.5L748.1 423.5"/>
<path stroke="#00ffff" d="M743.6 418.5L748.2 418.5"/>
<path stroke="#00ffff" fill="none" d="M745.5 413L743.8 410.3L742.1 407.7L740.3 405.1L738.4 402.6L736.5 400.1L734.5 397.6L732.4 395.3"/>
<path stroke="#00ffff" d="M742.1 407.7L742.9 400.3"/>
<path stroke="#00ffff" d="M742.1 407.7L735.1 405.1"/>
<path stroke="#00ffff" d="M740.3 405.1L741.2 395.1"/>
<path stroke="#00ffff" d="M740.3 405.1L730.8 401.8"/>
<path stroke="#00ffff" d="M738.4 402.6L739 393.5"/>
<path stroke="#00ffff" d="M738.4 402.6L729.8 399.8"/>
<path stroke="#00ffff" d="M736.5 400.1L736.7 392.9"/>
<path stroke="#00ffff" d="M736.5 400.1L729.6 398.2"/>
<path stroke="#00ffff" d="M734.5 397.6L734.3 391.5"/>
<path stroke="#00ffff" d="M734.5 397.6L728.5 396.3"/>
<path stroke="#00ffff" fill="none" d="M742.9 400.3L741.7 401.6L741.2 395.1L739.8 398.6L739 393.5L737.7 396.9L736.7 392.9L735.5 395.2L734.3 391.5L732.4 395.3"/>
<path stroke="#00ffff" fill="none" d="M735.1 405.1L736.7 404.8L730.8 401.8L734.4 402.2L729.8 399.8L733.2 400L729.6 398.2L731.9 398L728.5 396.3L732.4 395.3"/>
<path stroke="#00ffff" fill="none" d="M745.5 413L747.1 410.1L748.7 407.2L750.4 404.4L752.2 401.6L754.1 398.9L756.1 396.2L758.1 393.6"/>
<path stroke="#00ffff" d="M748.7 407.2L755.2 404.3"/>
<path stroke="#00ffff" d="M748.7 407.2L747.5 400.2"/>
<path stroke="#00ffff" d="M750.4 404.4L760.5 400.2"/>
<path stroke="#00ffff" d="M750.4 404.4L748.8 393.6"/>
<path stroke="#00ffff" d="M752.2 401.6L760.3 398.5"/>
<path stroke="#00ffff" d="M752.2 401.6L751.2 393"/>
<path stroke="#00ffff" d="M754.1 398.9L761.5 396.4"/>
<path stroke="#00ffff" d="M754.1 398.9L753.4 391.1"/>
<path stroke="#00ffff" d="M756.1 396.2L760.9 394.8"/>
<path stroke="#00ffff" d="M756.1 396.2L755.9 391.2"/>
<path stroke="#00ffff" fill="none" d="M755.2 404.3L754.1 403.9L760.5 400.2L756.3 401L760.3 398.5L757.4 398.7L761.5 396.4L758.4 396.5L760.9 394.8L758.1 393.6"/>
<path stroke="#00ffff" fill="none" d="M747.5 400.2L748.8 400.9L748.8 393.6L750.6 397.7L751.2 393L752.7 395.8L753.4 391.1L754.8 394L755.9 391.2L758.1 393.6"/>
<path stroke="#00ffff" fill="none" d="M745.5 413L741.9 412.8L738.4 413.2L734.8 414.1L731.5 415.6L728.3 417.7"/>
<path stroke="#00ffff" d="M738.4 413.2L732.8 408.8"/>
<path stroke="#00ffff" d="M738.4 413.2L732.7 417.5"/>
<path stroke="#00ffff" d="M734.8 414.1L729.2 411"/>
<path stroke="#00ffff" d="M734.8 414.1L730.4 418.8"/>
<path stroke="#00ffff" d="M731.5 415.6L726.6 414.2"/>
<path stroke="#00ffff" d="M731.5 415.6L728.9 420"/>
<path stroke="#00ffff" fill="none" d="M732.8 408.8L733.5 411.6L729.2 411L730.3 413.6L726.6 414.2L728.3 417.7"/>
<path stroke="#00ffff" fill="none" d="M732.7 417.5L733.8 416.1L730.4 418.8L731.2 417.4L728.9 420L728.3 417.7"/>
<path stroke="#00ffff" fill="none" d="M745.5 413L748.5 412.5L751.6 412.3L754.7 412.5L757.8 413.1L760.9 414L763.8 415.3"/>
<path stroke="#00ffff" d="M751.6 412.3L757.1 415.5"/>
<path stroke="#00ffff" d="M751.6 412.3L756 407.8"/>
<path stroke="#00ffff" d="M754.7 412.5L760.4 416.5"/>
<path stroke="#00ffff" d="M754.7 412.5L760 408"/>
<path stroke="#00ffff" d="M757.8 413.1L763 417.9"/>
<path stroke="#00ffff" d="M757.8 413.1L763.7 409.3"/>
<path stroke="#00ffff" d="M760.9 414L764.1 418.3"/>
<path stroke="#00ffff" d="M760.9 414L765.8 411.9"/>
<path stroke="#00ffff" fill="none" d="M757.1 415.5L756.2 414.4L760.4 416.5L759.2 415.2L763 417.9L761.6 416.1L764.1 418.3L763.8 415.3"/>
<path stroke="#00ffff" fill="none" d="M756 407.8L755.8 409.9L760 408L759.3 410.5L763.7 409.3L762.3 411.9L765.8 411.9L763.8 415.3"/>
<path stroke="#00ffff" fill="none" d="M745.5 413L743.6 415.9L741.6 418.7L739.5 421.3L737.2 423.9L734.8 426.4L732.2 428.7"/>
<path stroke="#00ffff" d="M741.6 418.7L734.4 421.1"/>
<path stroke="#00ffff" d="M741.6 418.7L742.2 426.2"/>
<path stroke="#00ffff" d="M739.5 421.3L733.2 423.2"/>
<path stroke="#00ffff" d="M739.5 421.3L739.7 427.9"/>
<path stroke="#00ffff" d="M737.2 423.9L730.9 425.3"/>
<path stroke="#00ffff" d="M737.2 423.9L737 430.3"/>
<path stroke="#00ffff" d="M734.8 426.4L730.4 427"/>
<path stroke="#00ffff" d="M734.8 426.4L734.3 430.8"/>
<path stroke="#00ffff" fill="none" d="M734.4 421.1L736.8 421.2L733.2 423.2L734.9 423.5L730.9 425.3L733 425.7L730.4 427L732.2 428.7"/>
<path stroke="#00ffff" fill="none" d="M742.2 426.2L740.8 423.9L739.7 427.9L738.4 426.2L737 430.3L735.8 428.1L734.3 430.8L732.2 428.7"/>
<path stroke="#00ffff" fill="none" d="M745.5 413L747.6 415.4L749.8 417.6L752.1 419.8L754.5 421.8L757 423.7L759.7 425.5"/>
<path stroke="#00ffff" d="M749.8 417.6L750.3 424.8"/>
<path stroke="#00ffff" d="M749.8 417.6L756.9 418.9"/>
<path stroke="#00ffff" d="M752.1 419.8L752.8 426"/>
<path stroke="#00ffff" d="M752.1 419.8L758.3 420.6"/>
<path stroke="#00ffff" d="M754.5 421.8L755.4 427"/>
<path stroke="#00ffff" d="M754.5 421.8L759.8 422.2"/>
<path stroke="#00ffff" d="M757 423.7L758.3 428.8"/>
<path stroke="#00ffff" d="M757 423.7L762.3 423.7"/>
<path stroke="#00ffff" fill="none" d="M750.3 424.8L751.3 422.4L752.8 426L753.7 423.9L755.4 427L756.4 425.6L758.3 428.8L759.7 425.5"/>
<path stroke="#00ffff" fill="none" d="M756.9 418.9L754.6 419.3L758.3 420.6L756.5 421.1L759.8 422.2L758.7 422.9L762.3 423.7L759.7 425.5"/>
<path stroke="#00ffff" fill="none" d="M745.5 413L745.7 409.9L745.9 406.7L746.1 403.6L746.3 400.4"/>
<path stroke="#00ffff" d="M745.7 409.9L748 407.3"/>
<path stroke="#00ffff" d="M745.7 409.9L743.8 407"/>
<path stroke="#00ffff" d="M745.9 406.7L749.6 402.6"/>
<path stroke="#00ffff" d="M745.9 406.7L742.8 402.1"/>
<path stroke="#00ffff" d="M746.1 403.6L748.6 400.8"/>
<path stroke="#00ffff" d="M746.1 403.6L744 400.5"/>
<path stroke="#00ffff" fill="none" d="M748 407.3L747.4 406.5L749.6 402.6L747.7 403.2L748.6 400.8L746.3 400.4"/>
<path stroke="#00ffff" fill="none" d="M743.8 407L744.4 406.3L742.8 402.1L744.6 403L744 400.5L746.3 400.4"/>
<path stroke="#00ffff" fill="none" d="M755.5 441L760.5 412"/>
<path stroke="#00ffff" fill="none" d="M761.5 441L764 412"/>
<path stroke="#00ffff" d="M756 438.5L762.7 438.5"/>
<path stroke="#00ffff" d="M756.8 433.5L763.1 433.5"/>
<path stroke="#00ffff" d="M757.7 428.5L763.5 428.5"/>
<path stroke="#00ffff" d="M758.5 423.5L763.9 423.5"/>
<path stroke="#00ffff" d="M759.3 418.5L764.2 418.5"/>
<path stroke="#00ffff" fill="none" d="M762 409L760.2 406.5L758.4 404.1L756.6 401.8L754.6 399.4L752.6 397.2L750.6 394.9L748.5 392.8L746.3 390.6"/>
<path stroke="#00ffff" d="M758.4 404.1L758.8 396.5"/>
<path stroke="#00ffff" d="M758.4 404.1L751.1 401.9"/>
<path stroke="#00ffff" d="M756.6 401.8L756.8 393.3"/>
<path stroke="#00ffff" d="M756.6 401.8L748.4 399.5"/>
<path stroke="#00ffff" d="M754.6 399.4L754.7 389.5"/>
<path stroke="#00ffff" d="M754.6 399.4L745 397"/>
<path stroke="#00ffff" d="M752.6 397.2L752.5 390.1"/>
<path stroke="#00ffff" d="M752.6 397.2L745.8 395.6"/>
<path stroke="#00ffff" d="M750.6 394.9L750.2 388.6"/>
<path stroke="#00ffff" d="M750.6 394.9L744.3 393.7"/>
<path stroke="#00ffff" d="M748.5 392.8L747.9 386.2"/>
<path stroke="#00ffff" d="M748.5 392.8L741.9 391.8"/>
<path stroke="#00ffff" fill="none" d="M758.8 396.5L757.7 398.5L756.8 393.3L755.7 395.6L754.7 389.5L753.6 393.6L752.5 390.1L751.5 392.4L750.2 388.6L749.3 390.3L747.9 386.2L746.3 390.6"/>
<path stroke="#00ffff" fill="none" d="M751.1 401.9L753.2 401.7L748.4 399.5L750.7 399.3L745 397L749.1 397.2L745.8 395.6L748 395.3L744.3 393.7L746 393.2L741.9 391.8L746.3 390.6"/>
<path stroke="#00ffff" fill="none" d="M762 409L763.6 406.3L765.2 403.6L766.9 400.9L768.7 398.3L770.5 395.7L772.4 393.2L774.4 390.7L776.4 388.2"/>
<path stroke="#00ffff" d="M765.2 403.6L772 400.8"/>
<path stroke="#00ffff" d="M765.2 403.6L764.2 396.3"/>
<path stroke="#00ffff" d="M766.9 400.9L776.2 397.3"/>
<path stroke="#00ffff" d="M766.9 400.9L765.7 391.1"/>
<path stroke="#00ffff" d="M768.7 398.3L777.6 395"/>
<path stroke="#00ffff" d="M768.7 398.3L767.7 388.8"/>
<path stroke="#00ffff" d="M770.5 395.7L778.5 393"/>
<path stroke="#00ffff" d="M770.5 395.7L769.9 387.3"/>
<path stroke="#00ffff" d="M772.4 393.2L778.7 391.3"/>
<path stroke="#00ffff" d="M772.4 393.2L772.2 386.7"/>
<path stroke="#00ffff" d="M774.4 390.7L780.8 389.1"/>
<path stroke="#00ffff" d="M774.4 390.7L774.4 384.1"/>
<path stroke="#00ffff" fill="none" d="M772 400.8L770.5 400.5L776.2 397.3L772.8 397.7L777.6 395L774.3 395.3L778.5 393L775.4 393.2L778.7 391.3L776.9 391L780.8 389.1L776.4 388.2"/>
<path stroke="#00ffff" fill="none" d="M764.2 396.3L765.4 397.5L765.7 391.1L767.2 394.3L767.7 388.8L769.2 392.1L769.9 387.3L771.2 390.3L772.2 386.7L773.3 388.3L774.4 384.1L776.4 388.2"/>
<path stroke="#00ffff" fill="none" d="M762 409L758.7 409L755.5 409.4L752.3 410.3L749.2 411.6L746.3 413.3L743.5 415.4"/>
<path stroke="#00ffff" d="M755.5 409.4L750.3 405.5"/>
<path stroke="#00ffff" d="M755.5 409.4L750.4 413.6"/>
<path stroke="#00ffff" d="M752.3 410.3L746.7 407"/>
<path stroke="#00ffff" d="M752.3 410.3L747.8 414.9"/>
<path stroke="#00ffff" d="M749.2 411.6L743.7 409.4"/>
<path stroke="#00ffff" d="M749.2 411.6L745.8 416.4"/>
<path stroke="#00ffff" d="M746.3 413.3L741.4 412.4"/>
<path stroke="#00ffff" d="M746.3 413.3L744.2 417.8"/>
<path stroke="#00ffff" fill="none" d="M750.3 405.5L750.9 407.9L746.7 407L747.7 409.4L743.7 409.4L744.9 411.6L741.4 412.4L743.5 415.4"/>
<path stroke="#00ffff" fill="none" d="M750.4 413.6L751.3 412.3L747.8 414.9L748.6 413.5L745.8 416.4L746.2 415L744.2 417.8L743.5 415.4"/>
<path stroke="#00ffff" fill="none" d="M762 409L765.4 409L768.7 409.3L772.1 410.1L775.3 411.2L778.5 412.7L781.4 414.6"/>
<path stroke="#00ffff" d="M768.7 409.3L774.4 413.8"/>
<path stroke="#00ffff" d="M768.7 409.3L774.5 404.9"/>
<path stroke="#00ffff" d="M772.1 410.1L777.1 415"/>
<path stroke="#00ffff" d="M772.1 410.1L778.1 406.3"/>
<path stroke="#00ffff" d="M775.3 411.2L779.1 416.1"/>
<path stroke="#00ffff" d="M775.3 411.2L781 408.7"/>
<path stroke="#00ffff" d="M778.5 412.7L781.4 418.2"/>
<path stroke="#00ffff" d="M778.5 412.7L784.4 411.2"/>
<path stroke="#00ffff" fill="none" d="M774.4 413.8L773.4 412.3L777.1 415L776.1 413.3L779.1 416.1L778.7 414.8L781.4 418.2L781.4 414.6"/>
<path stroke="#00ffff" fill="none" d="M774.5 404.9L773.6 407.5L778.1 406.3L776.9 408.9L781 408.7L780.1 410.8L784.4 411.2L781.4 414.6"/>
<path stroke="#00ffff" fill="none" d="M762 409L760.3 411.7L758.5 414.4L756.6 417L754.5 419.5L752.4 421.9L750.1 424.2L747.7 426.5"/>
<path stroke="#00ffff" d="M758.5 414.4L752.1 416.7"/>
<path stroke="#00ffff" d="M758.5 414.4L759.2 421.2"/>
<path stroke="#00ffff" d="M756.6 417L748.7 419.6"/>
<path stroke="#00ffff" d="M756.6 417L757.2 425.3"/>
<path stroke="#00ffff" d="M754.5 419.5L746.9 421.6"/>
<path stroke="#00ffff" d="M754.5 419.5L754.8 427.4"/>
<path stroke="#00ffff" d="M752.4 421.9L746.5 423.2"/>
<path stroke="#00ffff" d="M752.4 421.9L752.2 427.9"/>
<path stroke="#00ffff" d="M750.1 424.2L744.7 425.1"/>
<path stroke="#00ffff" d="M750.1 424.2L749.6 429.7"/>
<path stroke="#00ffff" fill="none" d="M752.1 416.7L753.6 417L748.7 419.6L751.3 419.5L746.9 421.6L749.7 421.6L746.5 423.2L748.1 423.7L744.7 425.1L747.7 426.5"/>
<path stroke="#00ffff" fill="none" d="M759.2 421.2L757.9 419.8L757.2 425.3L755.8 422.7L754.8 427.4L753.5 424.5L752.2 427.9L751.1 426.2L749.6 429.7L747.7 426.5"/>
<path stroke="#00ffff" fill="none" d="M762 409L764.1 411.8L766.2 414.4L768.6 417L771 419.5L773.6 421.8L776.3 424"/>
<path stroke="#00ffff" d="M766.2 414.4L766.1 421.7"/>
<path stroke="#00ffff" d="M766.2 414.4L773.3 416.3"/>
<path stroke="#00ffff" d="M768.6 417L768.8 425.4"/>
<path stroke="#00ffff" d="M768.6 417L776.8 418.9"/>
<path stroke="#00ffff" d="M771 419.5L771.5 425.8"/>
<path stroke="#00ffff" d="M771 419.5L777.3 420.5"/>
<path stroke="#00ffff" d="M773.6 421.8L774.3 426.2"/>
<path stroke="#00ffff" d="M773.6 421.8L778 422.2"/>
<path stroke="#00ffff" fill="none" d="M766.1 421.7L767.4 420L768.8 425.4L770 422.3L771.5 425.8L772.6 423.6L774.3 426.2L776.3 424"/>
<path stroke="#00ffff" fill="none" d="M773.3 416.3L771.6 416.8L776.8 418.9L773.8 419L777.3 420.5L775.2 421L778 422.2L776.3 424"/>
<path stroke="#00ffff" fill="none" d="M762 409L761.7 405.6L761.5 402.1L761.2 398.7L761 395.2"/>
<path stroke="#00ffff" d="M761.7 405.6L764.2 401.9"/>
<path stroke="#00ffff" d="M761.7 405.6L758.8 402.3"/>
<path stroke="#00ffff" d="M761.5 402.1L764.4 397.8"/>
<path stroke="#00ffff" d="M761.5 402.1L758 398.3"/>
<path stroke="#00ffff" d="M761.2 398.7L763.2 395.6"/>
<path stroke="#00ffff" d="M761.2 398.7L758.8 396"/>
<path stroke="#00ffff" fill="none" d="M764.2 401.9L763.1 401.6L764.4 397.8L762.7 398.4L763.2 395.6L761 395.2"/>
<path stroke="#00ffff" fill="none" d="M758.8 402.3L759.8 401.9L758 398.3L759.7 398.6L758.8 396L761 395.2"/>
<path stroke="#ffffff" fill="none" d="M485 573.5L595 573.5L595 574.5L630 574.5L630 575.5L664 575.5L664 577.5L698 577.5L698 578.5L765 578.5L765 579.5L784 579.5"/>
<text transform="translate(581.5 593) scale(-1 1)" font-size="6.5" fill="#ffffff" stroke="none" text-anchor="middle" textLength="30">侧 立 面</text>
<rect x="585.5" y="467.5" width="103" height="29" stroke="#00ff00" fill="none"/>
<path stroke="#00ff00" d="M688.5 488L688.5 496"/>
<rect x="656" y="487" width="34" height="10" fill="#000" stroke="none"/>
<path stroke="#00ff00" fill="none" d="M585.5 496.5L655.5 496.5L655.5 486.5L688.5 486.5L688.5 467.5"/>
<rect x="666.5" y="463.5" width="10" height="4" stroke="#00ff00" fill="none"/>
<rect x="667.5" y="482.5" width="9" height="4" stroke="#00ff00" fill="none"/>
<rect x="632.5" y="490.5" width="10" height="5" stroke="#00ff00" fill="none"/>
<path stroke="#00ff00" d="M637.5 488L637.5 490"/>
<path stroke="#00ff00" d="M571 488L585 483.5"/>
<rect x="571.5" y="488.5" width="14" height="2" stroke="#00ff00" fill="none"/>
<path stroke="#00ff00" d="M577.5 490L577.5 573"/>
<path stroke="#00ff00" d="M579.5 490L579.5 505"/>
<path stroke="#00ff00" d="M575 505.5L590 505.5"/>
<path stroke="#00ff00" d="M575 510.5L590 510.5"/>
<path stroke="#00ff00" d="M575 507.5L590 507.5"/>
<path stroke="#00ff00" d="M590.5 496L590.5 573"/>
<path stroke="#00ff00" d="M592.5 496L592.5 573"/>
<path stroke="#00ff00" d="M606.5 502L586 516"/>
<path stroke="#00ff00" d="M606.5 502L630 516"/>
<path stroke="#00ff00" d="M606.5 504L586 518"/>
<path stroke="#00ff00" d="M606.5 504L630 518"/>
<path stroke="#00ff00" d="M606.5 507L594 516"/>
<path stroke="#00ff00" d="M606.5 507L620 516"/>
<rect x="603.5" y="497.5" width="6" height="4" stroke="#00ff00" fill="none"/>
<rect x="600.5" y="517.5" width="15" height="16" stroke="#00ff00" fill="none"/>
<path stroke="#00ff00" d="M608.5 517L608.5 533"/>
<rect x="602.5" y="519.5" width="11" height="12" stroke="#00ff00" fill="none"/>
<path stroke="#00ff00" d="M625.5 515L625.5 545"/>
<rect x="631.5" y="503.5" width="9" height="18" stroke="#00ff00" fill="none"/>
<rect x="633.5" y="505.5" width="5" height="14" stroke="#00ff00" fill="none"/>
<path stroke="#00ff00" d="M633 512L638 519"/>
<path stroke="#00ff00" d="M625 531.5L671 531.5"/>
<path stroke="#00ff00" d="M577 540.5L618 540.5"/>
<path stroke="#00ff00" d="M649.5 496L649.5 531"/>
<path stroke="#00ff00" d="M649 510.5L702 510.5"/>
<path stroke="#00ff00" d="M649 513.5L702 513.5"/>
<path stroke="#00ff00" d="M649 516.5L700 516.5"/>
<path stroke="#00ff00" d="M649 519.5L700 519.5"/>
<rect x="663.5" y="489.5" width="20" height="21" stroke="#00ff00" fill="none"/>
<path stroke="#00ff00" d="M671.5 489L671.5 510"/>
<path stroke="#00ff00" d="M678.5 489L678.5 510"/>
<path stroke="#00ff00" d="M663 504.5L683 504.5"/>
<path stroke="#00ff00" d="M683 502.5L700 502.5"/>
<path stroke="#00ff00" d="M700.5 502L700.5 511"/>
<path stroke="#00ff00" d="M696.5 502L696.5 510"/>
<path stroke="#00ff00" fill="none" d="M700.5 517.5H716Q718.5 517.5 718.5 520V528.5H700.5Z"/>
<rect x="708.5" y="513.5" width="8" height="3" stroke="#00ff00" fill="none"/>
<path stroke="#00ff00" d="M700 530.5L718 530.5"/>
<path stroke="#00ff00" d="M700 533.5L716 533.5"/>
<rect x="710.5" y="533.5" width="4" height="35" stroke="#00ff00" fill="none"/>
<rect x="649.5" y="520.5" width="10" height="11" stroke="#00ff00" fill="none"/>
<path stroke="#00ff00" fill="none" d="M671 531L671 524.5L684 524.5"/>
<rect x="684.5" y="521.5" width="6" height="3" stroke="#00ff00" fill="none"/>
<path stroke="#00ff00" d="M672 527.5L710 544"/>
<rect x="618.5" y="542.5" width="92" height="4" stroke="#00ff00" fill="none"/>
<rect x="640.5" y="539.5" width="10" height="3" stroke="#00ff00" fill="none"/>
<rect x="622" y="547" width="82" height="24" fill="#00ff00" stroke="none"/>
<rect x="650" y="552" width="13" height="13" fill="#000" stroke="none"/>
<rect x="656" y="552" width="1" height="13" fill="#00ff00" stroke="none"/>
<path stroke="#00ff00" d="M577 565.5L622 565.5"/>
<path stroke="#00ff00" d="M577 569.5L622 569.5"/>
<path stroke="#00ffff" d="M622 571.5L704 571.5"/>
<path stroke="#00ff00" d="M706.5 546L706.5 578"/>
<path stroke="#00ff00" d="M721.5 568L721.5 579"/>
<rect x="711.5" y="567.5" width="11" height="4" stroke="#00ff00" fill="none"/>
<path stroke="#00ffff" fill="none" d="M540.5 573L541.5 544"/>
<path stroke="#00ffff" fill="none" d="M546.5 573L545 544"/>
<path stroke="#00ffff" d="M540.6 570.5L547.3 570.5"/>
<path stroke="#00ffff" d="M540.7 565.5L547 565.5"/>
<path stroke="#00ffff" d="M540.9 560.5L546.7 560.5"/>
<path stroke="#00ffff" d="M541 555.5L546.4 555.5"/>
<path stroke="#00ffff" d="M541.1 550.5L546.1 550.5"/>
<path stroke="#00ffff" fill="none" d="M543 541L541.3 538.5L539.6 536L537.9 533.5L536 531.1L534.2 528.7L532.2 526.3L530.2 524L528.2 521.8L526.1 519.5"/>
<path stroke="#00ffff" d="M539.6 536L540.2 529.1"/>
<path stroke="#00ffff" d="M539.6 536L533.2 533.7"/>
<path stroke="#00ffff" d="M537.9 533.5L538.7 522.5"/>
<path stroke="#00ffff" d="M537.9 533.5L527.4 530"/>
<path stroke="#00ffff" d="M536 531.1L536.7 520.2"/>
<path stroke="#00ffff" d="M536 531.1L525.7 527.8"/>
<path stroke="#00ffff" d="M534.2 528.7L534.5 518.9"/>
<path stroke="#00ffff" d="M534.2 528.7L524.7 526"/>
<path stroke="#00ffff" d="M532.2 526.3L532.3 517.5"/>
<path stroke="#00ffff" d="M532.2 526.3L523.7 524.1"/>
<path stroke="#00ffff" d="M530.2 524L530.1 517.4"/>
<path stroke="#00ffff" d="M530.2 524L523.7 522.6"/>
<path stroke="#00ffff" d="M528.2 521.8L527.8 515.5"/>
<path stroke="#00ffff" d="M528.2 521.8L522 520.6"/>
<path stroke="#00ffff" fill="none" d="M540.2 529.1L539.1 529.8L538.7 522.5L537.3 526.3L536.7 520.2L535.4 524.2L534.5 518.9L533.3 522.4L532.3 517.5L531.2 520.9L530.1 517.4L529.1 519.3L527.8 515.5L526.1 519.5"/>
<path stroke="#00ffff" fill="none" d="M533.2 533.7L534.1 533.2L527.4 530L531.2 530.4L525.7 527.8L529.7 528.2L524.7 526L528.2 526.2L523.7 524.1L527.1 524.2L523.7 522.6L525.7 522.2L522 520.6L526.1 519.5"/>
<path stroke="#00ffff" fill="none" d="M543 541L544.8 538.4L546.6 535.8L548.5 533.2L550.4 530.7L552.4 528.2L554.5 525.8L556.6 523.4L558.8 521.1L561 518.8"/>
<path stroke="#00ffff" d="M546.6 535.8L553.9 533.4"/>
<path stroke="#00ffff" d="M546.6 535.8L546.1 528.1"/>
<path stroke="#00ffff" d="M548.5 533.2L556.8 530.6"/>
<path stroke="#00ffff" d="M548.5 533.2L548 524.5"/>
<path stroke="#00ffff" d="M550.4 530.7L560.7 527.7"/>
<path stroke="#00ffff" d="M550.4 530.7L550 520"/>
<path stroke="#00ffff" d="M552.4 528.2L561 525.9"/>
<path stroke="#00ffff" d="M552.4 528.2L552.3 519.4"/>
<path stroke="#00ffff" d="M554.5 525.8L564.1 523.5"/>
<path stroke="#00ffff" d="M554.5 525.8L554.6 515.9"/>
<path stroke="#00ffff" d="M556.6 523.4L564.7 521.7"/>
<path stroke="#00ffff" d="M556.6 523.4L556.9 515.2"/>
<path stroke="#00ffff" d="M558.8 521.1L564.3 520.1"/>
<path stroke="#00ffff" d="M558.8 521.1L559.2 515.5"/>
<path stroke="#00ffff" fill="none" d="M553.9 533.4L551.8 533.1L556.8 530.6L554.6 530.4L560.7 527.7L556.6 528L561 525.9L558.5 525.7L564.1 523.5L560.4 523.5L564.7 521.7L561.4 521.5L564.3 520.1L561 518.8"/>
<path stroke="#00ffff" fill="none" d="M546.1 528.1L547.3 530L548 524.5L549.2 526.6L550 520L551.3 524.1L552.3 519.4L553.4 521.9L554.6 515.9L555.7 519.6L556.9 515.2L557.9 518.5L559.2 515.5L561 518.8"/>
<path stroke="#00ffff" fill="none" d="M543 541L539.9 540.5L536.7 540.3L533.5 540.5L530.4 541.1L527.2 542L524.2 543.3L521.2 544.9"/>
<path stroke="#00ffff" d="M536.7 540.3L531.3 534.5"/>
<path stroke="#00ffff" d="M536.7 540.3L529.7 544.2"/>
<path stroke="#00ffff" d="M533.5 540.5L526.4 534"/>
<path stroke="#00ffff" d="M533.5 540.5L525.5 545.8"/>
<path stroke="#00ffff" d="M530.4 541.1L523.7 536.2"/>
<path stroke="#00ffff" d="M530.4 541.1L524.1 546.4"/>
<path stroke="#00ffff" d="M527.2 542L521.9 539.2"/>
<path stroke="#00ffff" d="M527.2 542L523.3 546.5"/>
<path stroke="#00ffff" d="M524.2 543.3L519.7 541.9"/>
<path stroke="#00ffff" d="M524.2 543.3L521.8 547.2"/>
<path stroke="#00ffff" fill="none" d="M531.3 534.5L531.7 537L526.4 534L528.2 537.7L523.7 536.2L525.5 539.4L521.9 539.2L523 541.5L519.7 541.9L521.2 544.9"/>
<path stroke="#00ffff" fill="none" d="M529.7 544.2L531 542.9L525.5 545.8L528 543.7L524.1 546.4L526 544.2L523.3 546.5L524 544.9L521.8 547.2L521.2 544.9"/>
<path stroke="#00ffff" fill="none" d="M543 541L546.3 540.7L549.5 540.8L552.8 541.2L556 541.9L559.2 542.9L562.3 544.2L565.4 545.9"/>
<path stroke="#00ffff" d="M549.5 540.8L554.8 544.2"/>
<path stroke="#00ffff" d="M549.5 540.8L554.2 536.5"/>
<path stroke="#00ffff" d="M552.8 541.2L559.7 546.5"/>
<path stroke="#00ffff" d="M552.8 541.2L559.6 535.8"/>
<path stroke="#00ffff" d="M556 541.9L561.6 547.1"/>
<path stroke="#00ffff" d="M556 541.9L562.5 537.7"/>
<path stroke="#00ffff" d="M559.2 542.9L563 547.5"/>
<path stroke="#00ffff" d="M559.2 542.9L564.7 540.3"/>
<path stroke="#00ffff" d="M562.3 544.2L565.2 549.1"/>
<path stroke="#00ffff" d="M562.3 544.2L567.8 542.6"/>
<path stroke="#00ffff" fill="none" d="M554.8 544.2L554.5 543.4L559.7 546.5L557.8 544.4L561.6 547.1L560.2 545.1L563 547.5L562.6 546.2L565.2 549.1L565.4 545.9"/>
<path stroke="#00ffff" fill="none" d="M554.2 536.5L554.3 538.3L559.6 535.8L558.1 538.9L562.5 537.7L560.9 540.5L564.7 540.3L563.8 542.4L567.8 542.6L565.4 545.9"/>
<path stroke="#00ffff" fill="none" d="M543 541L541.2 543.6L539.2 546.1L537.2 548.6L535 550.9L532.8 553.2L530.5 555.5L528.1 557.6L525.6 559.6"/>
<path stroke="#00ffff" d="M539.2 546.1L532.3 548.2"/>
<path stroke="#00ffff" d="M539.2 546.1L539.5 553.3"/>
<path stroke="#00ffff" d="M537.2 548.6L528.1 551"/>
<path stroke="#00ffff" d="M537.2 548.6L537.4 558"/>
<path stroke="#00ffff" d="M535 550.9L525.9 553.1"/>
<path stroke="#00ffff" d="M535 550.9L534.9 560.4"/>
<path stroke="#00ffff" d="M532.8 553.2L525.1 554.7"/>
<path stroke="#00ffff" d="M532.8 553.2L532.4 561.1"/>
<path stroke="#00ffff" d="M530.5 555.5L523.5 556.4"/>
<path stroke="#00ffff" d="M530.5 555.5L529.8 562.5"/>
<path stroke="#00ffff" d="M528.1 557.6L522.6 558"/>
<path stroke="#00ffff" d="M528.1 557.6L527.2 563"/>
<path stroke="#00ffff" fill="none" d="M532.3 548.2L533.8 548.6L528.1 551L531.1 551L525.9 553.1L529.3 553.1L525.1 554.7L527.6 555L523.5 556.4L525.9 556.9L522.6 558L525.6 559.6"/>
<path stroke="#00ffff" fill="none" d="M539.5 553.3L538.3 551.9L537.4 558L536.1 554.9L534.9 560.4L533.8 556.8L532.4 561.1L531.3 558.4L529.8 562.5L528.8 560L527.2 563L525.6 559.6"/>
<path stroke="#00ffff" fill="none" d="M543 541L545.1 543.6L547.3 546.1L549.6 548.6L552 550.9L554.5 553.2L557.1 555.3L559.8 557.3"/>
<path stroke="#00ffff" d="M547.3 546.1L547.4 554"/>
<path stroke="#00ffff" d="M547.3 546.1L554.9 548"/>
<path stroke="#00ffff" d="M549.6 548.6L550 558.9"/>
<path stroke="#00ffff" d="M549.6 548.6L559.7 550.7"/>
<path stroke="#00ffff" d="M552 550.9L552.7 559.5"/>
<path stroke="#00ffff" d="M552 550.9L560.4 552.3"/>
<path stroke="#00ffff" d="M554.5 553.2L555.4 560"/>
<path stroke="#00ffff" d="M554.5 553.2L561.4 553.9"/>
<path stroke="#00ffff" d="M557.1 555.3L558.1 560.2"/>
<path stroke="#00ffff" d="M557.1 555.3L562.1 555.5"/>
<path stroke="#00ffff" fill="none" d="M547.4 554L548.6 552.4L550 558.9L551.1 554.9L552.7 559.5L553.7 556.3L555.4 560L556.3 557.5L558.1 560.2L559.8 557.3"/>
<path stroke="#00ffff" fill="none" d="M554.9 548L553.3 548.4L559.7 550.7L555.9 550.7L560.4 552.3L557.5 552.6L561.4 553.9L559.1 554.5L562.1 555.5L559.8 557.3"/>
<path stroke="#00ffff" fill="none" d="M543 541L542.9 537.9L542.7 534.8L542.6 531.7L542.4 528.5L542.3 525.4"/>
<path stroke="#00ffff" d="M542.7 534.8L546.1 529.9"/>
<path stroke="#00ffff" d="M542.7 534.8L538.8 530.3"/>
<path stroke="#00ffff" d="M542.6 531.7L545.2 527.9"/>
<path stroke="#00ffff" d="M542.6 531.7L539.6 528.2"/>
<path stroke="#00ffff" d="M542.4 528.5L545 524.9"/>
<path stroke="#00ffff" d="M542.4 528.5L539.5 525.1"/>
<path stroke="#00ffff" fill="none" d="M546.1 529.9L544.3 530.8L545.2 527.9L543.9 528.1L545 524.9L542.3 525.4"/>
<path stroke="#00ffff" fill="none" d="M538.8 530.3L540.7 531L539.6 528.2L540.9 528.2L539.5 525.1L542.3 525.4"/>
<path stroke="#00ffff" fill="none" d="M727.5 578L731.5 551"/>
<path stroke="#00ffff" fill="none" d="M733.5 578L735 551"/>
<path stroke="#00ffff" d="M727.9 575.5L734.6 575.5"/>
<path stroke="#00ffff" d="M728.6 570.5L734.9 570.5"/>
<path stroke="#00ffff" d="M729.3 565.5L735.1 565.5"/>
<path stroke="#00ffff" d="M730 560.5L735.3 560.5"/>
<path stroke="#00ffff" d="M730.7 555.5L735.5 555.5"/>
<path stroke="#00ffff" fill="none" d="M733 548L731.2 545.4L729.3 542.9L727.3 540.4L725.3 538L723.2 535.7L721 533.4L718.8 531.1"/>
<path stroke="#00ffff" d="M729.3 542.9L729.6 535.6"/>
<path stroke="#00ffff" d="M729.3 542.9L722.3 540.8"/>
<path stroke="#00ffff" d="M727.3 540.4L727.6 530.7"/>
<path stroke="#00ffff" d="M727.3 540.4L718 537.8"/>
<path stroke="#00ffff" d="M725.3 538L725.3 529.2"/>
<path stroke="#00ffff" d="M725.3 538L716.7 535.9"/>
<path stroke="#00ffff" d="M723.2 535.7L723 529.6"/>
<path stroke="#00ffff" d="M723.2 535.7L717.3 534.4"/>
<path stroke="#00ffff" d="M721 533.4L720.6 528.4"/>
<path stroke="#00ffff" d="M721 533.4L716.1 532.6"/>
<path stroke="#00ffff" fill="none" d="M729.6 535.6L728.5 537L727.6 530.7L726.4 534.1L725.3 529.2L724.2 532.8L723 529.6L721.9 531.5L720.6 528.4L718.8 531.1"/>
<path stroke="#00ffff" fill="none" d="M722.3 540.8L723.8 540.4L718 537.8L721.4 537.9L716.7 535.9L720.3 535.9L717.3 534.4L719.1 534L716.1 532.6L718.8 531.1"/>
<path stroke="#00ffff" fill="none" d="M733 548L734.6 545.1L736.3 542.3L738.1 539.5L739.9 536.8L741.9 534.1L743.9 531.5L746 528.9"/>
<path stroke="#00ffff" d="M736.3 542.3L742.4 539.8"/>
<path stroke="#00ffff" d="M736.3 542.3L735.3 535.8"/>
<path stroke="#00ffff" d="M738.1 539.5L747.7 535.8"/>
<path stroke="#00ffff" d="M738.1 539.5L736.8 529.3"/>
<path stroke="#00ffff" d="M739.9 536.8L746.8 534.3"/>
<path stroke="#00ffff" d="M739.9 536.8L739.2 529.5"/>
<path stroke="#00ffff" d="M741.9 534.1L748.6 532"/>
<path stroke="#00ffff" d="M741.9 534.1L741.4 527.1"/>
<path stroke="#00ffff" d="M743.9 531.5L748.9 530.1"/>
<path stroke="#00ffff" d="M743.9 531.5L743.8 526.3"/>
<path stroke="#00ffff" fill="none" d="M742.4 539.8L741.5 539.2L747.7 535.8L743.5 536.4L746.8 534.3L744.6 534.2L748.6 532L746.1 531.8L748.9 530.1L746 528.9"/>
<path stroke="#00ffff" fill="none" d="M735.3 535.8L736.6 536.3L736.8 529.3L738.4 533.3L739.2 529.5L740.6 531.5L741.4 527.1L742.7 529.4L743.8 526.3L746 528.9"/>
<path stroke="#00ffff" fill="none" d="M733 548L729.4 547.9L725.9 548.4L722.4 549.5L719.1 551.1L715.9 553.2"/>
<path stroke="#00ffff" d="M725.9 548.4L719.8 543.9"/>
<path stroke="#00ffff" d="M725.9 548.4L720 553.2"/>
<path stroke="#00ffff" d="M722.4 549.5L716.1 546.2"/>
<path stroke="#00ffff" d="M722.4 549.5L717.7 554.7"/>
<path stroke="#00ffff" d="M719.1 551.1L714.1 549.8"/>
<path stroke="#00ffff" d="M719.1 551.1L716.6 555.6"/>
<path stroke="#00ffff" fill="none" d="M719.8 543.9L720.7 546.8L716.1 546.2L717.6 549L714.1 549.8L715.9 553.2"/>
<path stroke="#00ffff" fill="none" d="M720 553.2L721.2 551.7L717.7 554.7L718.8 553L716.6 555.6L715.9 553.2"/>
<path stroke="#00ffff" fill="none" d="M733 548L736 547.5L739.1 547.3L742.2 547.5L745.3 548.1L748.4 549L751.3 550.3"/>
<path stroke="#00ffff" d="M739.1 547.3L744.7 550.5"/>
<path stroke="#00ffff" d="M739.1 547.3L743.6 542.7"/>
<path stroke="#00ffff" d="M742.2 547.5L747.6 551.3"/>
<path stroke="#00ffff" d="M742.2 547.5L747.2 543.2"/>
<path stroke="#00ffff" d="M745.3 548.1L750.4 552.8"/>
<path stroke="#00ffff" d="M745.3 548.1L751.1 544.3"/>
<path stroke="#00ffff" d="M748.4 549L751.6 553.4"/>
<path stroke="#00ffff" d="M748.4 549L753.4 546.9"/>
<path stroke="#00ffff" fill="none" d="M744.7 550.5L743.7 549.4L747.6 551.3L746.6 550.2L750.4 552.8L749.1 551.1L751.6 553.4L751.3 550.3"/>
<path stroke="#00ffff" fill="none" d="M743.6 542.7L743.3 545L747.2 543.2L746.7 545.6L751.1 544.3L749.8 547L753.4 546.9L751.3 550.3"/>
<path stroke="#00ffff" fill="none" d="M733 548L730.8 550.6L728.5 553.2L726.1 555.6L723.5 557.9L720.8 560.1L718 562.1"/>
<path stroke="#00ffff" d="M728.5 553.2L721 554.8"/>
<path stroke="#00ffff" d="M728.5 553.2L728.2 560.8"/>
<path stroke="#00ffff" d="M726.1 555.6L718.2 556.9"/>
<path stroke="#00ffff" d="M726.1 555.6L725.5 563.6"/>
<path stroke="#00ffff" d="M723.5 557.9L716.5 558.7"/>
<path stroke="#00ffff" d="M723.5 557.9L722.6 564.9"/>
<path stroke="#00ffff" d="M720.8 560.1L715.4 560.3"/>
<path stroke="#00ffff" d="M720.8 560.1L719.7 565.4"/>
<path stroke="#00ffff" fill="none" d="M721 554.8L723.1 555.2L718.2 556.9L720.7 557.3L716.5 558.7L718.7 559.3L715.4 560.3L718 562.1"/>
<path stroke="#00ffff" fill="none" d="M728.2 560.8L727 558.7L725.5 563.6L724.4 560.9L722.6 564.9L721.6 562.4L719.7 565.4L718 562.1"/>
<path stroke="#00ffff" fill="none" d="M733 548L735 550.5L737.1 552.8L739.3 555.1L741.6 557.2L744.1 559.2L746.6 561.1"/>
<path stroke="#00ffff" d="M737.1 552.8L737.2 559.9"/>
<path stroke="#00ffff" d="M737.1 552.8L744 554.4"/>
<path stroke="#00ffff" d="M739.3 555.1L739.7 561.9"/>
<path stroke="#00ffff" d="M739.3 555.1L746 556.3"/>
<path stroke="#00ffff" d="M741.6 557.2L742.4 563.4"/>
<path stroke="#00ffff" d="M741.6 557.2L747.8 557.9"/>
<path stroke="#00ffff" d="M744.1 559.2L745 563.8"/>
<path stroke="#00ffff" d="M744.1 559.2L748.8 559.4"/>
<path stroke="#00ffff" fill="none" d="M737.2 559.9L738.4 557.8L739.7 561.9L740.8 559.7L742.4 563.4L743.3 561.2L745 563.8L746.6 561.1"/>
<path stroke="#00ffff" fill="none" d="M744 554.4L742 554.7L746 556.3L744 556.7L747.8 557.9L745.8 558.5L748.8 559.4L746.6 561.1"/>
<path stroke="#00ffff" fill="none" d="M733 548L733 544.9L732.9 541.7L732.9 538.6L732.8 535.4"/>
<path stroke="#00ffff" d="M733 544.9L735.1 542.1"/>
<path stroke="#00ffff" d="M733 544.9L730.8 542.1"/>
<path stroke="#00ffff" d="M732.9 541.7L735.8 537.9"/>
<path stroke="#00ffff" d="M732.9 541.7L730 538"/>
<path stroke="#00ffff" d="M732.9 538.6L735 535.7"/>
<path stroke="#00ffff" d="M732.9 538.6L730.7 535.8"/>
<path stroke="#00ffff" fill="none" d="M735.1 542.1L734.3 541.5L735.8 537.9L734.3 538.3L735 535.7L732.8 535.4"/>
<path stroke="#00ffff" fill="none" d="M730.8 542.1L731.5 541.5L730 538L731.5 538.3L730.7 535.8L732.8 535.4"/>
<path stroke="#00ffff" fill="none" d="M741.5 578L747.5 548"/>
<path stroke="#00ffff" fill="none" d="M747.5 578L751 548"/>
<path stroke="#00ffff" d="M742.1 575.5L748.8 575.5"/>
<path stroke="#00ffff" d="M743 570.5L749.4 570.5"/>
<path stroke="#00ffff" d="M744 565.5L749.9 565.5"/>
<path stroke="#00ffff" d="M745 560.5L750.4 560.5"/>
<path stroke="#00ffff" d="M745.9 555.5L751 555.5"/>
<path stroke="#00ffff" d="M746.9 550.5L751.5 550.5"/>
<path stroke="#00ffff" fill="none" d="M749 545L747.2 542.2L745.4 539.5L743.4 536.8L741.4 534.2L739.3 531.6L737.2 529.1L734.9 526.7"/>
<path stroke="#00ffff" d="M745.4 539.5L746.1 531.6"/>
<path stroke="#00ffff" d="M745.4 539.5L737.9 536.9"/>
<path stroke="#00ffff" d="M743.4 536.8L744.2 525.8"/>
<path stroke="#00ffff" d="M743.4 536.8L733 533.4"/>
<path stroke="#00ffff" d="M741.4 534.2L741.8 526.5"/>
<path stroke="#00ffff" d="M741.4 534.2L734 532"/>
<path stroke="#00ffff" d="M739.3 531.6L739.4 524.1"/>
<path stroke="#00ffff" d="M739.3 531.6L732 529.8"/>
<path stroke="#00ffff" d="M737.2 529.1L736.9 523.1"/>
<path stroke="#00ffff" d="M737.2 529.1L731.2 527.9"/>
<path stroke="#00ffff" fill="none" d="M746.1 531.6L744.8 533L744.2 525.8L742.7 530.4L741.8 526.5L740.5 528.7L739.4 524.1L738.2 526.6L736.9 523.1L734.9 526.7"/>
<path stroke="#00ffff" fill="none" d="M737.9 536.9L739.5 536.5L733 533.4L737.5 534L734 532L736.3 531.8L732 529.8L734.6 529.5L731.2 527.9L734.9 526.7"/>
<path stroke="#00ffff" fill="none" d="M749 545L750.7 542.5L752.5 540L754.3 537.6L756.2 535.3L758.1 533L760.2 530.7L762.2 528.5L764.3 526.3"/>
<path stroke="#00ffff" d="M752.5 540L758.1 538.3"/>
<path stroke="#00ffff" d="M752.5 540L752.1 534.2"/>
<path stroke="#00ffff" d="M754.3 537.6L762.1 535.3"/>
<path stroke="#00ffff" d="M754.3 537.6L753.9 529.5"/>
<path stroke="#00ffff" d="M756.2 535.3L764.8 532.9"/>
<path stroke="#00ffff" d="M756.2 535.3L756 526.3"/>
<path stroke="#00ffff" d="M758.1 533L766.6 530.8"/>
<path stroke="#00ffff" d="M758.1 533L758.2 524.2"/>
<path stroke="#00ffff" d="M760.2 530.7L766.4 529.4"/>
<path stroke="#00ffff" d="M760.2 530.7L760.4 524.3"/>
<path stroke="#00ffff" d="M762.2 528.5L767.9 527.5"/>
<path stroke="#00ffff" d="M762.2 528.5L762.7 522.7"/>
<path stroke="#00ffff" fill="none" d="M758.1 538.3L757.1 537.7L762.1 535.3L759.8 535.1L764.8 532.9L761.9 532.9L766.6 530.8L763.2 530.9L766.4 529.4L764.5 528.9L767.9 527.5L764.3 526.3"/>
<path stroke="#00ffff" fill="none" d="M752.1 534.2L753.2 535L753.9 529.5L755.1 531.8L756 526.3L757.1 529.2L758.2 524.2L759.2 527.7L760.4 524.3L761.4 526.2L762.7 522.7L764.3 526.3"/>
<path stroke="#00ffff" fill="none" d="M749 545L745.9 544.9L742.8 545.2L739.7 545.9L736.7 547L733.8 548.5L731.1 550.4"/>
<path stroke="#00ffff" d="M742.8 545.2L736.8 540.3"/>
<path stroke="#00ffff" d="M742.8 545.2L736.7 549.7"/>
<path stroke="#00ffff" d="M739.7 545.9L732.6 541.3"/>
<path stroke="#00ffff" d="M739.7 545.9L733.6 551.6"/>
<path stroke="#00ffff" d="M736.7 547L731.2 544.6"/>
<path stroke="#00ffff" d="M736.7 547L733 551.7"/>
<path stroke="#00ffff" d="M733.8 548.5L728.3 547.3"/>
<path stroke="#00ffff" d="M733.8 548.5L731.3 553.6"/>
<path stroke="#00ffff" fill="none" d="M736.8 540.3L737.7 542.9L732.6 541.3L734.7 544.5L731.2 544.6L732.2 546.7L728.3 547.3L731.1 550.4"/>
<path stroke="#00ffff" fill="none" d="M736.7 549.7L737.9 548.4L733.6 551.6L735.5 549.3L733 551.7L733.6 550.4L731.3 553.6L731.1 550.4"/>
<path stroke="#00ffff" fill="none" d="M749 545L752.2 544.5L755.4 544.4L758.7 544.6L761.9 545.2L765.1 546.2L768.2 547.6"/>
<path stroke="#00ffff" d="M755.4 544.4L762.3 548.3"/>
<path stroke="#00ffff" d="M755.4 544.4L761 538.6"/>
<path stroke="#00ffff" d="M758.7 544.6L765.7 549.7"/>
<path stroke="#00ffff" d="M758.7 544.6L765.3 539"/>
<path stroke="#00ffff" d="M761.9 545.2L766.1 549.2"/>
<path stroke="#00ffff" d="M761.9 545.2L766.8 542.1"/>
<path stroke="#00ffff" d="M765.1 546.2L768.4 550.6"/>
<path stroke="#00ffff" d="M765.1 546.2L770.2 544.1"/>
<path stroke="#00ffff" fill="none" d="M762.3 548.3L760.9 547L765.7 549.7L763.4 547.4L766.1 549.2L765.5 548L768.4 550.6L768.2 547.6"/>
<path stroke="#00ffff" fill="none" d="M761 538.6L760.4 541.4L765.3 539L763.4 542.5L766.8 542.1L766.2 544.3L770.2 544.1L768.2 547.6"/>
<path stroke="#00ffff" fill="none" d="M749 545L747.2 547.5L745.2 549.9L743.2 552.2L741 554.4L738.7 556.5L736.4 558.5L734 560.5"/>
<path stroke="#00ffff" d="M745.2 549.9L738.2 551.7"/>
<path stroke="#00ffff" d="M745.2 549.9L745.3 557.1"/>
<path stroke="#00ffff" d="M743.2 552.2L735.8 553.9"/>
<path stroke="#00ffff" d="M743.2 552.2L743.1 559.7"/>
<path stroke="#00ffff" d="M741 554.4L733.8 555.7"/>
<path stroke="#00ffff" d="M741 554.4L740.6 561.6"/>
<path stroke="#00ffff" d="M738.7 556.5L732 557.4"/>
<path stroke="#00ffff" d="M738.7 556.5L738 563.3"/>
<path stroke="#00ffff" d="M736.4 558.5L731.2 558.9"/>
<path stroke="#00ffff" d="M736.4 558.5L735.5 563.6"/>
<path stroke="#00ffff" fill="none" d="M738.2 551.7L740.2 552L735.8 553.9L738.1 554.1L733.8 555.7L736 556.1L732 557.4L734.3 557.9L731.2 558.9L734 560.5"/>
<path stroke="#00ffff" fill="none" d="M745.3 557.1L744.2 555.1L743.1 559.7L741.9 557.3L740.6 561.6L739.6 559.3L738 563.3L737.1 560.8L735.5 563.6L734 560.5"/>
<path stroke="#00ffff" fill="none" d="M749 545L751 547.6L753.2 550.1L755.5 552.4L757.9 554.7L760.5 556.9L763.1 558.9"/>
<path stroke="#00ffff" d="M753.2 550.1L753.3 555.9"/>
<path stroke="#00ffff" d="M753.2 550.1L758.9 551.4"/>
<path stroke="#00ffff" d="M755.5 552.4L756 560.6"/>
<path stroke="#00ffff" d="M755.5 552.4L763.6 554"/>
<path stroke="#00ffff" d="M757.9 554.7L758.6 560.6"/>
<path stroke="#00ffff" d="M757.9 554.7L763.8 555.5"/>
<path stroke="#00ffff" d="M760.5 556.9L761.5 562.3"/>
<path stroke="#00ffff" d="M760.5 556.9L766 557.2"/>
<path stroke="#00ffff" fill="none" d="M753.3 555.9L754.5 555.1L756 560.6L757 557.4L758.6 560.6L759.7 558.9L761.5 562.3L763.1 558.9"/>
<path stroke="#00ffff" fill="none" d="M758.9 551.4L758.1 552L763.6 554L760.6 554.2L763.8 555.5L762.3 556.1L766 557.2L763.1 558.9"/>
<path stroke="#00ffff" fill="none" d="M749 545L748.8 541.7L748.6 538.4L748.4 535.1L748.2 531.8"/>
<path stroke="#00ffff" d="M748.8 541.7L751.1 538.3"/>
<path stroke="#00ffff" d="M748.8 541.7L746.1 538.7"/>
<path stroke="#00ffff" d="M748.6 538.4L751.7 533.9"/>
<path stroke="#00ffff" d="M748.6 538.4L744.9 534.3"/>
<path stroke="#00ffff" d="M748.4 535.1L750.8 531.5"/>
<path stroke="#00ffff" d="M748.4 535.1L745.5 531.9"/>
<path stroke="#00ffff" fill="none" d="M751.1 538.3L750.2 537.9L751.7 533.9L750 534.5L750.8 531.5L748.2 531.8"/>
<path stroke="#00ffff" fill="none" d="M746.1 538.7L746.9 538.1L744.9 534.3L746.7 534.7L745.5 531.9L748.2 531.8"/>
<text transform="translate(339 551.5) scale(-1 1)" font-size="5" fill="#ffffff" stroke="none" text-anchor="start" font-weight="bold">客厅面积</text>
<text transform="translate(389 551.5) scale(-1 1)" font-size="5" fill="#ffffff" stroke="none" text-anchor="start" font-weight="bold">26.4平方</text>
<text transform="translate(427 551.5) scale(-1 1)" font-size="5" fill="#ffffff" stroke="none" text-anchor="start" font-weight="bold">1层1</text>
<text transform="translate(339 559) scale(-1 1)" font-size="5" fill="#ffffff" stroke="none" text-anchor="start" font-weight="bold">主卧室面积</text>
<text transform="translate(389 559) scale(-1 1)" font-size="5" fill="#ffffff" stroke="none" text-anchor="start" font-weight="bold">18.2平方米</text>
<text transform="translate(427 559) scale(-1 1)" font-size="5" fill="#ffffff" stroke="none" text-anchor="start" font-weight="bold">2层1</text>
<text transform="translate(339 566) scale(-1 1)" font-size="5" fill="#ffffff" stroke="none" text-anchor="start" font-weight="bold">卧室面积</text>
<text transform="translate(389 566) scale(-1 1)" font-size="5" fill="#ffffff" stroke="none" text-anchor="start" font-weight="bold">12.6平</text>
<text transform="translate(427 566) scale(-1 1)" font-size="5" fill="#ffffff" stroke="none" text-anchor="start" font-weight="bold">3层2</text>
<text transform="translate(339 573.5) scale(-1 1)" font-size="5" fill="#ffffff" stroke="none" text-anchor="start" font-weight="bold">餐厅面积</text>
<text transform="translate(389 573.5) scale(-1 1)" font-size="5" fill="#ffffff" stroke="none" text-anchor="start" font-weight="bold">10.5平</text>
<text transform="translate(427 573.5) scale(-1 1)" font-size="5" fill="#ffffff" stroke="none" text-anchor="start" font-weight="bold">4层面</text>
<text transform="translate(339 581) scale(-1 1)" font-size="5" fill="#ffffff" stroke="none" text-anchor="start" font-weight="bold">厨房面积</text>
<text transform="translate(389 581) scale(-1 1)" font-size="5" fill="#ffffff" stroke="none" text-anchor="start" font-weight="bold">11.1平</text>
<text transform="translate(427 581) scale(-1 1)" font-size="5" fill="#ffffff" stroke="none" text-anchor="start" font-weight="bold">5层面1</text>
<text transform="translate(339 588) scale(-1 1)" font-size="5" fill="#ffffff" stroke="none" text-anchor="start" font-weight="bold">卫生间面积</text>
<text transform="translate(389 588) scale(-1 1)" font-size="5" fill="#ffffff" stroke="none" text-anchor="start" font-weight="bold">13平方</text>
<text transform="translate(427 588) scale(-1 1)" font-size="5" fill="#ffffff" stroke="none" text-anchor="start" font-weight="bold">6面</text>
<path stroke="#999" d="M303 592.5L430 592.5"/>
<text transform="translate(372 603) scale(-1 1)" font-size="6.5" fill="#ffffff" stroke="none" text-anchor="middle" textLength="51">本户型建筑面积</text>
<text transform="translate(430 603) scale(-1 1)" font-size="6.5" fill="#ffffff" stroke="none" text-anchor="middle" textLength="44">367.4平方米</text>
<text transform="translate(478 603) scale(-1 1)" font-size="6.5" fill="#ffffff" stroke="none" text-anchor="middle" textLength="24">户型图</text>
</svg>
<svg width="0" height="0" style="position:absolute"><defs><radialGradient id="lg" cx="40%" cy="35%" r="70%"><stop offset="0" stop-color="#eaf4ff"/><stop offset="1" stop-color="#9cc4ee"/></radialGradient></defs></svg>
<svg style="position:absolute;left:8px;top:12px" width="33" height="34" viewBox="0 0 33 34" ><rect x="0" y="0" width="32" height="32.500" rx="5" fill="#2a7af0"/><path d="M5 25L13.500 5H16.500L8.500 25ZM16.500 5H19.500L28.500 25H25Z" fill="#7cc0f0"/><path d="M7.500 25L16 17.500L24.500 25H20.500V33H11V25Z" fill="#d4e4ff"/><path d="M15 9l.8 1.600 1.800.2-1.300 1.200.4 1.800-1.700-.9-1.700.9.400-1.800-1.300-1.200 1.800-.2z" fill="#e8f2ff"/></svg>
<svg style="position:absolute;left:53px;top:37px" width="18" height="17" viewBox="0 0 18 17" ><path d="M1 3.500H6L7.500 5H14.500V12.500H1Z" fill="#e2bd72" stroke="#b98a32" stroke-width="1"/><path d="M1 12.500L3 7H16L14.500 12.500Z" fill="#f0d48e" stroke="#b98a32" stroke-width="1"/><path d="M9 7.500L12.500 7 12 9.500 14 11.500 15.500 10 16.500 15.500 11 15 12.500 13.500 10.500 11.500Z" fill="#2faa3c" stroke="#1c7c28" stroke-width=".6"/></svg>
<svg style="position:absolute;left:78px;top:35px" width="22" height="20" viewBox="0 0 22 20" ><path d="M11.500 7Q13 13 14 19.500" stroke="#8a5a2a" stroke-width="1.800" fill="none"/><path d="M11.500 6.500Q7 2.500 2 5.500Q6 5 8 7Q4 7 1.500 11Q6 8 11 8Q14 8 16 10.500Q17.500 11 19 12.500Q18.500 8.500 14.500 7Q18 5.500 21 8Q18.500 3 13.500 5Q12 1.500 8 1.500Q11 3.500 11.500 6.500Z" fill="#3fae49" stroke="#2a8a34" stroke-width=".5"/></svg>
<svg style="position:absolute;left:107.5px;top:35.5px" width="17" height="17" viewBox="0 0 17 17" ><path d="M1 1.500H13.500L16 4V15.500H1Z" fill="#2f62b8" stroke="#1d3f80" stroke-width="1"/><rect x="3.500" y="1.500" width="9" height="6" fill="#f4f8ff"/><rect x="4" y="10" width="9" height="5.500" fill="#c8d4e8"/><rect x="5.500" y="11" width="2.500" height="3.500" fill="#2f62b8"/></svg>
<svg style="position:absolute;left:135px;top:37px" width="17" height="17" viewBox="0 0 17 17" ><rect x="4" y="1" width="9" height="5" fill="#f8f8f8" stroke="#222" stroke-width="1"/><rect x="1" y="5.500" width="15" height="7" rx="1.500" fill="#2a2a2a"/><rect x="4" y="10" width="9" height="5.500" fill="#fdfdfd" stroke="#222" stroke-width=".8"/><circle cx="13.500" cy="7.500" r=".8" fill="#9f9"/></svg>
<svg style="position:absolute;left:162px;top:36px" width="17" height="18" viewBox="0 0 17 18" ><path d="M4 3.500H10L13 6.500V17H4Z" fill="#fff" stroke="#c8c8c8" stroke-width=".8"/><path d="M7 6Q8 2.500 12 3V1L16 4.500 12 8V6Q9 5.500 7 6Z" fill="#f2c230" stroke="#c08a10" stroke-width=".6"/><rect x="1" y="8.500" width="15" height="6.500" rx="1" fill="#e8202a"/><text x="8.500" y="14" font-size="6.500" font-weight="bold" fill="#fff" text-anchor="middle" font-family="Liberation Sans,sans-serif">PDF</text></svg>
<div style="position:absolute;left:190px;top:36px;width:1px;height:18px;background:#b4b4b4"></div>
<svg style="position:absolute;left:203px;top:37.5px" width="15" height="15" viewBox="0 0 15 15" ><path d="M7.500 0L10.500 3.500H8.500V6.500H11.500V4.500L15 7.500 11.500 10.500V8.500H8.500V11.500H10.500L7.500 15 4.500 11.500H6.500V8.500H3.500V10.500L0 7.500 3.500 4.500V6.500H6.500V3.500H4.500Z" fill="#2d6fdc"/></svg>
<svg style="position:absolute;left:227px;top:36px" width="20" height="18" viewBox="0 0 20 18" ><path d="M10.94 11.34L15.14 15.54" stroke="#5b8fc9" stroke-width="3" stroke-linecap="round"/><path d="M11.44 11.84L14.94 15.34" stroke="#a8c8ea" stroke-width="1.2" stroke-linecap="round"/><circle cx="7.3" cy="7.7" r="5.2" fill="url(#lg)" stroke="#3d6fae" stroke-width="1.3"/><path d="M15.500 1L13.300 4H14.800V8H13.300L15.500 11 17.700 8H16.200V4H17.700Z" fill="#2d6fdc"/></svg>
<svg style="position:absolute;left:254px;top:36px" width="20" height="18" viewBox="0 0 20 18" ><rect x="2" y="1.800" width="13.500" height="13.500" fill="none" stroke="#111" stroke-width="1.200" stroke-dasharray="2 1.500"/><path d="M12.22 11.52L16.42 15.72" stroke="#5b8fc9" stroke-width="3" stroke-linecap="round"/><path d="M12.72 12.02L16.22 15.52" stroke="#a8c8ea" stroke-width="1.2" stroke-linecap="round"/><circle cx="9" cy="8.3" r="4.6" fill="url(#lg)" stroke="#3d6fae" stroke-width="1.3"/></svg>
<svg style="position:absolute;left:281px;top:36px" width="20" height="18" viewBox="0 0 20 18" ><path d="M12.9 11.9L17.1 16.1" stroke="#5b8fc9" stroke-width="3" stroke-linecap="round"/><path d="M13.4 12.4L16.9 15.9" stroke="#a8c8ea" stroke-width="1.2" stroke-linecap="round"/><circle cx="8.7" cy="7.7" r="6" fill="url(#lg)" stroke="#3d6fae" stroke-width="1.3"/><path d="M5.700 7.700H11.700M8.700 4.700V10.700" stroke="#111" stroke-width="1.400"/></svg>
<svg style="position:absolute;left:308px;top:36px" width="20" height="18" viewBox="0 0 20 18" ><path d="M13.2 11.9L17.4 16.1" stroke="#5b8fc9" stroke-width="3" stroke-linecap="round"/><path d="M13.7 12.4L17.2 15.9" stroke="#a8c8ea" stroke-width="1.2" stroke-linecap="round"/><circle cx="9" cy="7.7" r="6" fill="url(#lg)" stroke="#3d6fae" stroke-width="1.3"/><path d="M6 7.700H12" stroke="#111" stroke-width="1.400"/></svg>
<svg style="position:absolute;left:334px;top:36px" width="20" height="18" viewBox="0 0 20 18" ><path d="M11.34 11.34L15.54 15.54" stroke="#5b8fc9" stroke-width="3" stroke-linecap="round"/><path d="M11.84 11.84L15.34 15.34" stroke="#a8c8ea" stroke-width="1.2" stroke-linecap="round"/><circle cx="7.7" cy="7.7" r="5.2" fill="url(#lg)" stroke="#3d6fae" stroke-width="1.3"/><path d="M11.500 4.500Q15.500 4 16 8Q16 11 13 11.500" stroke="#2d6fdc" stroke-width="1.800" fill="none"/><path d="M9.500 4.500L13 2V7Z" fill="#2d6fdc"/></svg>
<div style="position:absolute;left:365px;top:35px;width:1px;height:20px;background:#a8a8a8"></div>
<svg style="position:absolute;left:376px;top:36px" width="19" height="18" viewBox="0 0 19 18" ><path d="M1 13.500L8 10.500 17 12 10 15.500Z" fill="#cfc650" stroke="#9a9030" stroke-width=".6"/><path d="M1 11.500L8 8.500 17 10 10 13.500Z" fill="#ddd566" stroke="#9a9030" stroke-width=".6"/><path d="M1 9.500L8 6.500 17 8 10 11.500Z" fill="#f0ea8a" stroke="#9a9030" stroke-width=".6"/><path d="M4.500 8Q5 4 9 2.500Q13 .5 17.500 2.500V5Q14 5 12.500 7.500Q11 8.500 9.500 7.500L6.500 9Q5 9.200 4.500 8Z" fill="#e6b98a" stroke="#a87848" stroke-width=".6"/></svg>
<svg style="position:absolute;left:402px;top:36px" width="18" height="18" viewBox="0 0 18 18" ><path d="M5.500 1.500H16.500V12H5.500Z" fill="#4c9df0" stroke="#1f66c4" stroke-width="1"/><path d="M1.500 5.500H12.500V16.500H1.500ZM1.500 5.500L5.500 1.500M12.500 5.500L16.500 1.500M12.500 16.500L16.500 12M1.500 16.500L5.500 12" fill="none" stroke="#111" stroke-width="1"/></svg>
<svg style="position:absolute;left:430px;top:36px" width="18" height="18" viewBox="0 0 18 18" ><path d="M1 4L8 1.500V14.500L1 12Z" fill="#1a8cf0"/><path d="M8 1.500L10 3V16.500L8 14.500Z" fill="#5fc0ff"/><path d="M1 12L8 14.500 10 16.500 3 14.500Z" fill="#0d6ac8"/><path d="M10 3.500L16.500 2V14.500L10 16.500ZM10 10L14 7M14 7V14" fill="#fff" stroke="#111" stroke-width=".9" stroke-dasharray="1.500 1.200"/></svg>
<div style="position:absolute;left:459px;top:35px;width:1px;height:20px;background:#a8a8a8"></div>
<svg style="position:absolute;left:470px;top:36px" width="18" height="18" viewBox="0 0 18 18" ><path d="M3 3L15 15" stroke="#111" stroke-width="1.300"/><circle cx="3" cy="3" r="1.600" fill="#ffd820" stroke="#111" stroke-width=".8"/><circle cx="15" cy="15" r="1.600" fill="#ffd820" stroke="#111" stroke-width=".8"/></svg>
<svg style="position:absolute;left:497px;top:35px" width="18" height="18" viewBox="0 0 18 18" ><path d="M1.500 1V16M16.500 1V16M1.500 5H16.500" stroke="#3a78e0" stroke-width="1.100" fill="none"/><path d="M1.500 5L4.500 3.500V6.500ZM16.500 5L13.500 3.500V6.500Z" fill="#3a78e0"/><path d="M1 16H17" stroke="#111" stroke-width="1.300"/></svg>
<svg style="position:absolute;left:524px;top:35px" width="19" height="18" viewBox="0 0 19 18" ><text x="0.500" y="16" font-size="16" fill="#3a72c4" stroke="#3a72c4" stroke-width=".4" font-family="Liberation Sans,sans-serif">A</text><rect x="10.500" y="1.500" width="6.500" height="5.500" fill="#e8e8e8" stroke="#777" stroke-width=".9"/><path d="M11 3.300H16.500" stroke="#555" stroke-width="1"/></svg>
<svg style="position:absolute;left:551px;top:36px" width="18" height="18" viewBox="0 0 18 18" ><path d="M3 11L11 2Q12 1.200 13.200 2L15.500 4.500Q16 5.500 15.200 6.500L8.500 14.500H5Z" fill="#f2a8a8" stroke="#c86a6a" stroke-width=".8"/><path d="M3 11L6.500 14.500" stroke="#c86a6a" stroke-width=".8"/><path d="M1 15.500H17" stroke="#444" stroke-width="1.300"/></svg>
<svg style="position:absolute;left:579px;top:36px" width="16" height="17" viewBox="0 0 16 17" ><path d="M4 4.500Q12.500 2.500 12.500 9Q12.500 13.500 8 15" stroke="#2d6fdc" stroke-width="3" fill="none"/><path d="M1 1.500L7.500 2 3 8.500Z" fill="#2d6fdc"/></svg>
<svg style="position:absolute;left:607px;top:36px" width="16" height="17" viewBox="0 0 16 17" ><path d="M12 4.500Q3.500 2.500 3.500 9Q3.500 13.500 8 15" stroke="#2d6fdc" stroke-width="3" fill="none"/><path d="M15 1.500L8.500 2 13 8.500Z" fill="#2d6fdc"/></svg>
<svg style="position:absolute;left:2px;top:8px" width="64" height="62" viewBox="0 0 64 62" ><defs><clipPath id="wc"><circle cx="30.500" cy="30.500" r="27.500"/></clipPath></defs><g clip-path="url(#wc)"><path d="M0 0H64V26L46 30L20 40L0 38Z" fill="#1f86d2" fill-opacity=".62"/><path d="M0 38L20 42L46 34L64 26V64H0Z" fill="#f0a040" fill-opacity=".92"/><rect x="18" y="44" width="8" height="20" fill="#fff" fill-opacity=".62"/><rect x="27" y="45" width="9" height="20" fill="#a85a10" fill-opacity=".85"/><rect x="37" y="44" width="8" height="14" fill="#fff" fill-opacity=".62"/></g><path d="M36 19L45 11.500V33L41 34.500V17.500Z" fill="#fff" fill-opacity=".92"/><g transform="rotate(-17 31 30)"><path fill-rule="evenodd" fill="#fff" fill-opacity=".93" d="M1 32a30 13 0 1 0 60 0a30 13 0 1 0 -60 0ZM6 28a25 7.500 0 1 1 50 0a25 7.500 0 1 1 -50 0Z"/></g></svg>
<div style="position:absolute;left:67px;top:13px;font:900 26.600px/36px 'Liberation Serif','Noto Serif CJK SC',serif;color:#3396e8;opacity:.85;white-space:nowrap;letter-spacing:.2px;transform:skewX(-4deg) scaleY(1.05);transform-origin:0 0;mix-blend-mode:multiply;-webkit-text-stroke:.8px #3396e8">河东软件园</div>
<div style="position:absolute;left:66.500px;top:47px;font:bold 18.500px/20px 'Liberation Serif',serif;color:#3c9a3c;opacity:.85;white-space:nowrap;letter-spacing:.85px">www.pc0359.cn</div>
</body></html>
